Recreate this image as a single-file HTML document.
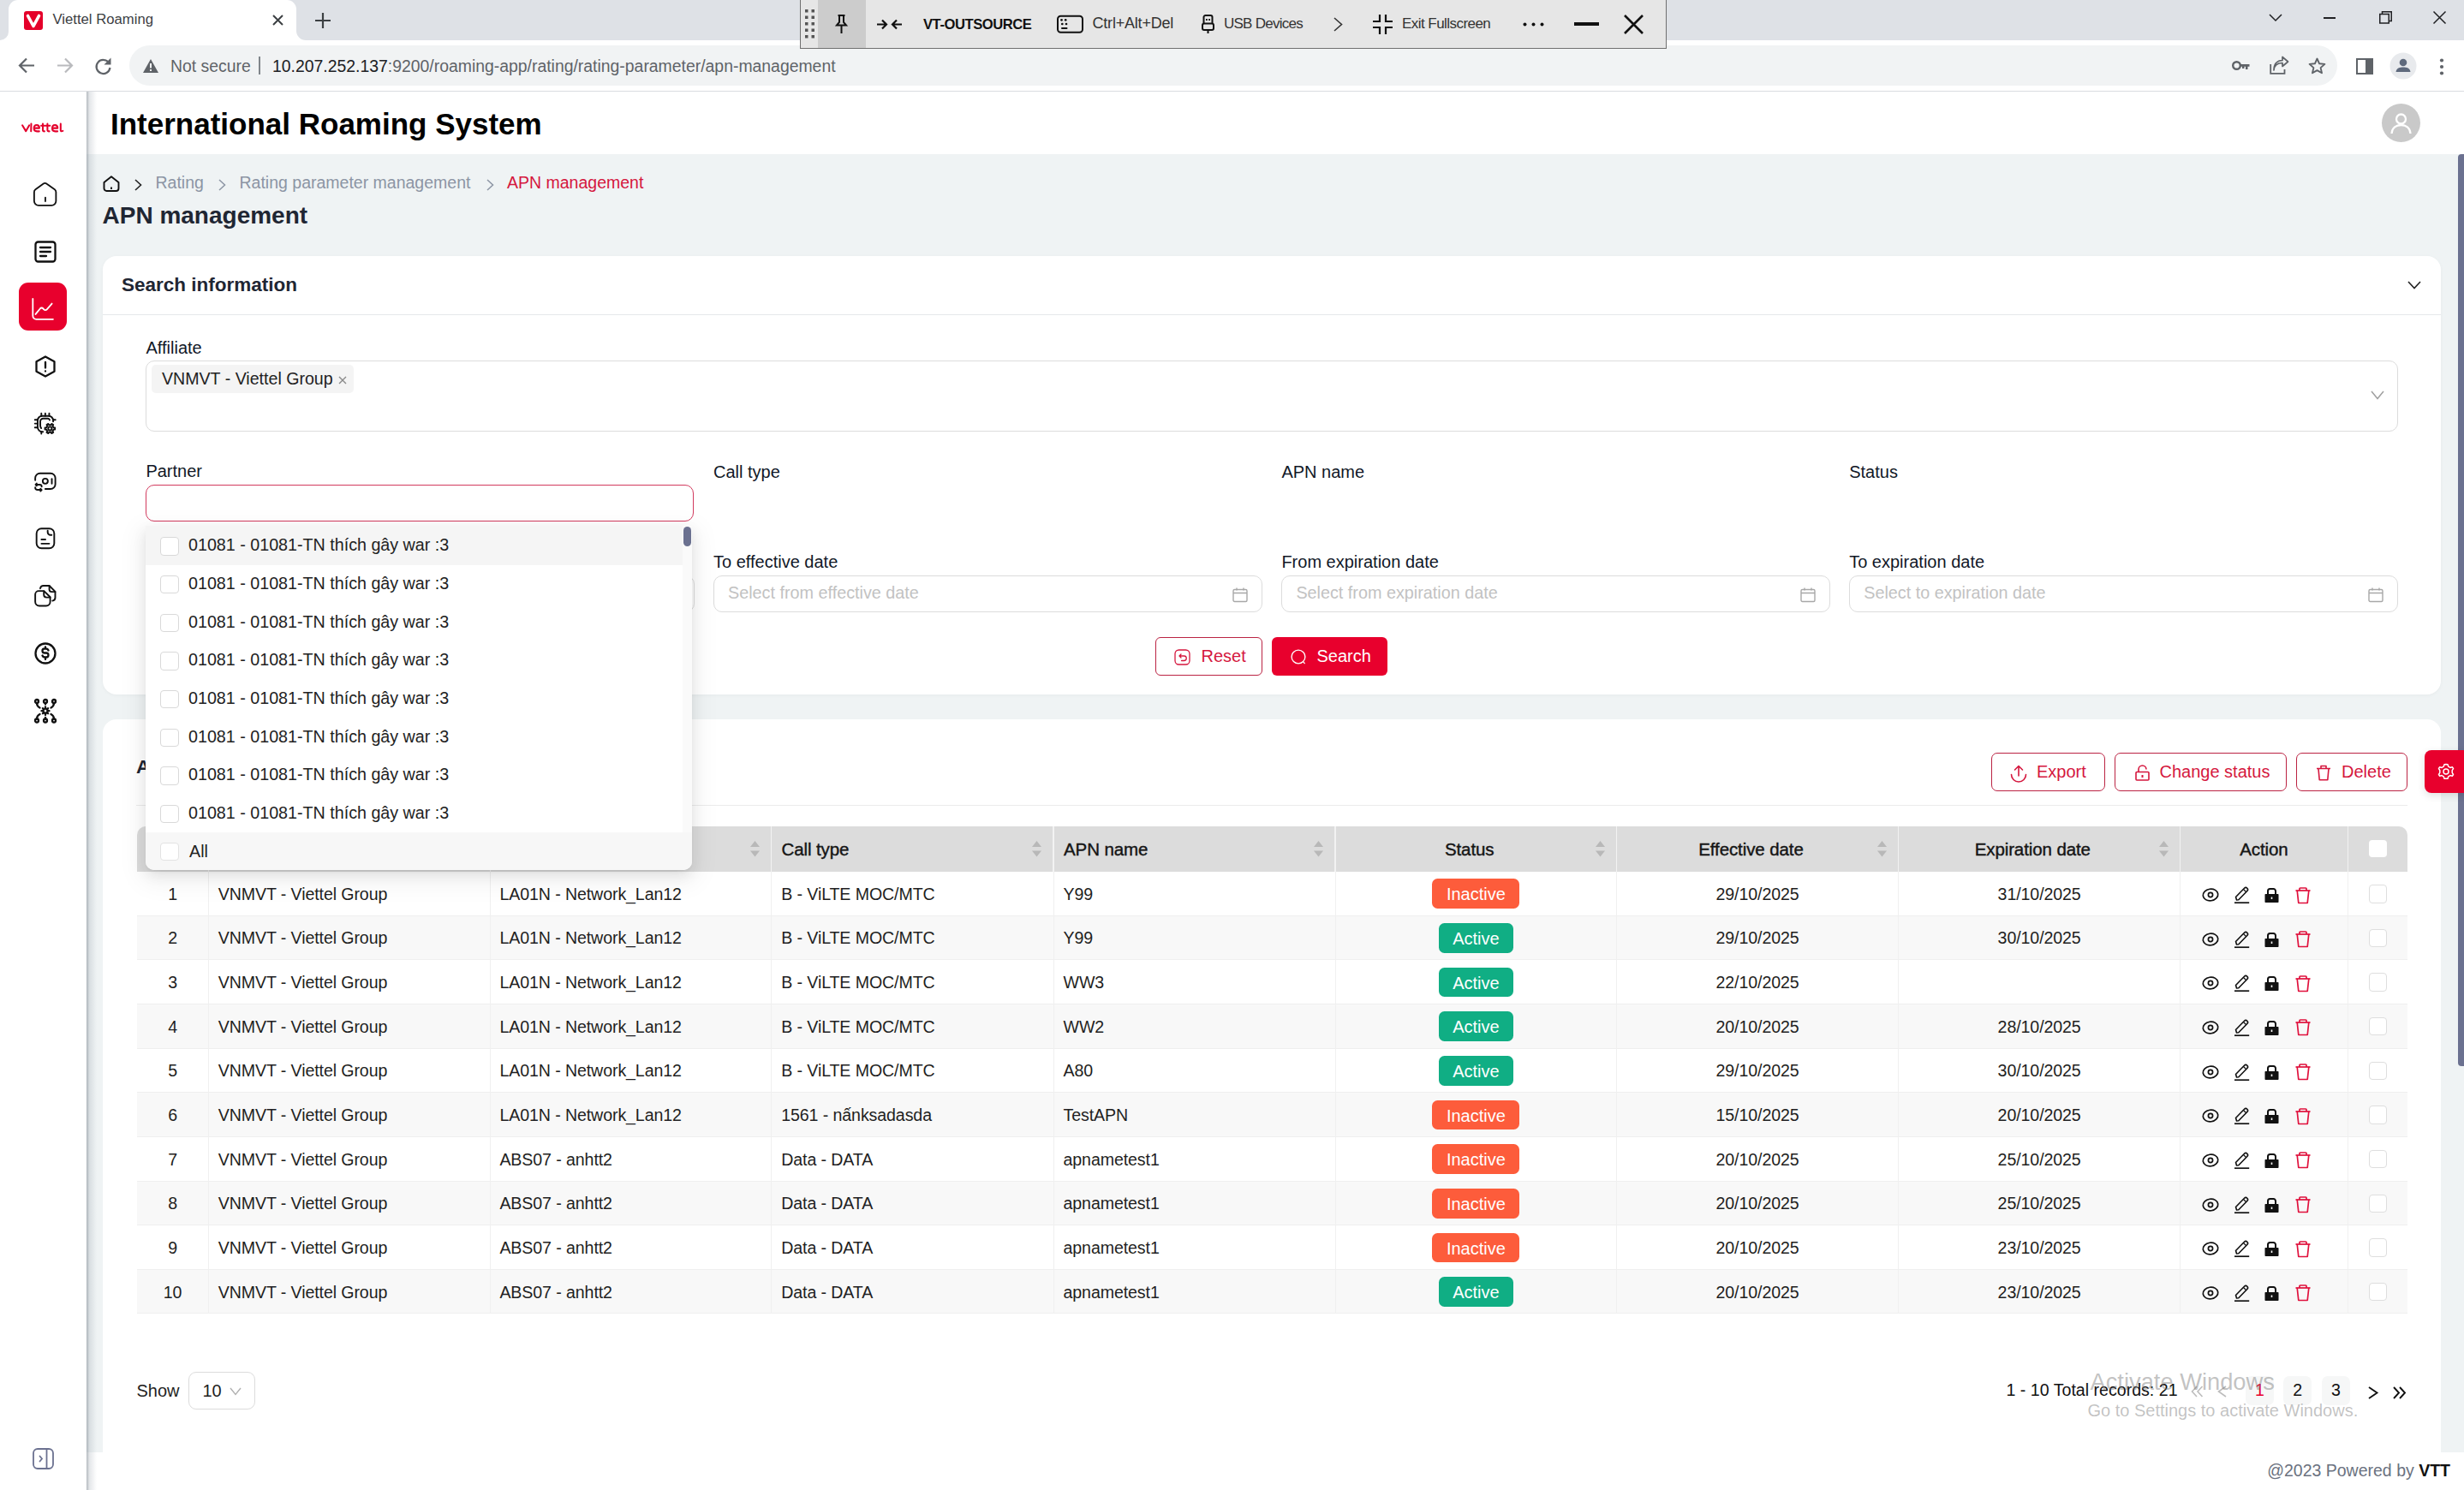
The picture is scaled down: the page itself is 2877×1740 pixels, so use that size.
<!DOCTYPE html><html><head><meta charset="utf-8"><title>Viettel Roaming</title><style>
html,body{margin:0;padding:0;}
body{width:2877px;height:1740px;position:relative;overflow:hidden;background:#fff;font-family:"Liberation Sans", sans-serif;}
.t{position:absolute;line-height:1;white-space:nowrap;}
.r{position:absolute;box-sizing:border-box;}
svg.r{overflow:visible;}

</style></head><body>
<div class="r" style="left:0.00px;top:0.00px;width:2877.00px;height:47.00px;background:#dee1e6;"></div>
<div class="r" style="left:10px;top:0;width:336px;height:47px;background:#fff;border-radius:11px 11px 0 0;"></div>
<div class="r" style="left:0.00px;top:35.00px;width:10.00px;height:12.00px;background:#fff;"></div>
<div class="r" style="left:0.00px;top:35.00px;width:10.00px;height:12.00px;background:#dee1e6;border-bottom-right-radius:11px;"></div>
<div class="r" style="left:346.00px;top:35.00px;width:12.00px;height:12.00px;background:#fff;"></div>
<div class="r" style="left:346.00px;top:35.00px;width:12.00px;height:12.00px;background:#dee1e6;border-bottom-left-radius:11px;"></div>
<svg class="r" style="left:28.00px;top:13.00px;" width="22" height="22" viewBox="0 0 22 22"><rect x="0" y="0" width="22" height="22" rx="3" fill="#e5002a"/><path d="M4.5 5.5 L11 17.5 L17.5 5.5" stroke="#fff" stroke-width="3.6" fill="none" stroke-linejoin="round" stroke-linecap="round"/></svg>
<div class="t" style="left:61.50px;top:15.36px;font-size:16.7px;color:#3c4043;">Viettel Roaming</div>
<svg class="r" style="left:318.00px;top:17.00px;" width="13" height="13" viewBox="0 0 13 13"><path d="M1 1 L12 12 M12 1 L1 12" stroke="#3c4043" stroke-width="2"/></svg>
<svg class="r" style="left:367.00px;top:14.00px;" width="20" height="20" viewBox="0 0 20 20"><path d="M10 1 V19 M1 10 H19" stroke="#3c4043" stroke-width="2.2"/></svg>
<svg class="r" style="left:2649.00px;top:16.00px;" width="16" height="9" viewBox="0 0 16 9"><path d="M1 1 L8 8 L15 1" stroke="#202124" stroke-width="1.5" fill="none"/></svg>
<div class="r" style="left:2713.00px;top:20.00px;width:14.00px;height:1.50px;background:#202124;"></div>
<svg class="r" style="left:2778.00px;top:13.00px;" width="15" height="15" viewBox="0 0 15 15"><rect x="0.75" y="3.5" width="10.5" height="10.5" fill="none" stroke="#202124" stroke-width="1.5"/><path d="M3.5 3.5 V0.75 H14.25 V11.5 H11.25" fill="none" stroke="#202124" stroke-width="1.5"/></svg>
<svg class="r" style="left:2841.00px;top:13.00px;" width="15" height="15" viewBox="0 0 15 15"><path d="M0.5 0.5 L14.5 14.5 M14.5 0.5 L0.5 14.5" stroke="#202124" stroke-width="1.5"/></svg>
<div class="r" style="left:0.00px;top:47.00px;width:2877.00px;height:59.00px;background:#fff;"></div>
<div class="r" style="left:0.00px;top:105.50px;width:2877.00px;height:1.50px;background:#dadce0;"></div>
<svg class="r" style="left:21.00px;top:67.00px;" width="20" height="19" viewBox="0 0 20 19"><path d="M19 9.5 H3 M10 1.5 L2 9.5 L10 17.5" stroke="#5f6368" stroke-width="2.2" fill="none"/></svg>
<svg class="r" style="left:66.00px;top:67.00px;" width="20" height="19" viewBox="0 0 20 19"><path d="M1 9.5 H17 M10 1.5 L18 9.5 L10 17.5" stroke="#b9babd" stroke-width="2.2" fill="none"/></svg>
<svg class="r" style="left:110.00px;top:67.00px;" width="21" height="20" viewBox="0 0 21 20"><path d="M17.2 6.5 A8 8 0 1 0 18.5 12" stroke="#5f6368" stroke-width="2.2" fill="none"/><path d="M19.5 0.5 V8.5 H11.5 Z" fill="#5f6368"/></svg>
<div class="r" style="left:151.00px;top:53.00px;width:2578.00px;height:47.00px;background:#f1f3f4;border-radius:23.5px;"></div>
<svg class="r" style="left:167.00px;top:69.00px;" width="18" height="16" viewBox="0 0 18 16"><path d="M9 0 L18 16 H0 Z" fill="#5f6368"/><rect x="8" y="5" width="2" height="5.5" fill="#f1f3f4"/><rect x="8" y="12" width="2" height="2" fill="#f1f3f4"/></svg>
<div class="t" style="left:199.00px;top:67.68px;font-size:19.4px;color:#5f6368;">Not secure</div>
<div class="r" style="left:302.00px;top:66.00px;width:2.00px;height:21.30px;background:#80868b;"></div>
<div class="t" style="left:318.00px;top:67.68px;font-size:19.4px;color:#5f6368;"><span style="color:#202124">10.207.252.137</span>:9200/roaming-app/rating/rating-parameter/apn-management</div>
<svg class="r" style="left:2606.00px;top:70.00px;" width="21" height="13" viewBox="0 0 21 13"><circle cx="5.5" cy="6.5" r="4.3" stroke="#5f6368" stroke-width="2.4" fill="none"/><path d="M9.5 5 H20.5 V7.8 H18.5 V11 H16 V7.8 H14.5 V10 H12 V7.8 H9.5 Z" fill="#5f6368"/></svg>
<svg class="r" style="left:2650.00px;top:67.00px;" width="23" height="20" viewBox="0 0 23 20"><path d="M1.2 8 V18.8 H17.5 V14" stroke="#5f6368" stroke-width="1.8" fill="none"/><path d="M5 15 C5.5 9 9.5 6.5 15 6.5 V10.5 L21.5 5 L15 -0.5 V3.5 C8.5 3.5 5 8 5 15 Z" stroke="#5f6368" stroke-width="1.7" fill="none" stroke-linejoin="round"/></svg>
<svg class="r" style="left:2695.00px;top:67.00px;" width="21" height="20" viewBox="0 0 21 20"><path d="M10.5 1.5 L13.1 7.3 L19.4 7.9 L14.6 12.1 L16 18.3 L10.5 15.1 L5 18.3 L6.4 12.1 L1.6 7.9 L7.9 7.3 Z" stroke="#5f6368" stroke-width="1.9" fill="none" stroke-linejoin="round"/></svg>
<svg class="r" style="left:2751.00px;top:68.00px;" width="20" height="19" viewBox="0 0 20 19"><rect x="1" y="1" width="18" height="17" stroke="#5f6368" stroke-width="2" fill="none"/><rect x="11" y="1" width="8" height="17" fill="#5f6368"/></svg>
<svg class="r" style="left:2790.00px;top:61.00px;" width="32" height="32" viewBox="0 0 32 32"><circle cx="16" cy="16" r="15.5" fill="#e8eaed"/><circle cx="16" cy="12" r="4.3" fill="#5f6a7d"/><path d="M7.5 23 C8 18.5 12 17.5 16 17.5 C20 17.5 24 18.5 24.5 23 Z" fill="#5f6a7d"/></svg>
<svg class="r" style="left:2848.00px;top:68.00px;" width="6" height="20" viewBox="0 0 6 20"><circle cx="3" cy="2.5" r="2.1" fill="#5f6368"/><circle cx="3" cy="10" r="2.1" fill="#5f6368"/><circle cx="3" cy="17.5" r="2.1" fill="#5f6368"/></svg>
<div class="r" style="left:934.00px;top:0.00px;width:1012.00px;height:57.00px;background:#e6e6e6;border:1.5px solid #707070;border-top:none;"></div>
<div class="r" style="left:955.00px;top:0.00px;width:56.00px;height:55.50px;background:#cccccc;"></div>
<svg class="r" style="left:940.00px;top:11.00px;" width="12" height="34" viewBox="0 0 12 34"><rect x="0" y="0" width="3.5" height="3.5" fill="#555"/><rect x="0" y="7.5" width="3.5" height="3.5" fill="#555"/><rect x="0" y="15" width="3.5" height="3.5" fill="#555"/><rect x="0" y="22.5" width="3.5" height="3.5" fill="#555"/><rect x="0" y="30" width="3.5" height="3.5" fill="#555"/><rect x="7.5" y="0" width="3.5" height="3.5" fill="#555"/><rect x="7.5" y="7.5" width="3.5" height="3.5" fill="#555"/><rect x="7.5" y="15" width="3.5" height="3.5" fill="#555"/><rect x="7.5" y="22.5" width="3.5" height="3.5" fill="#555"/><rect x="7.5" y="30" width="3.5" height="3.5" fill="#555"/></svg>
<svg class="r" style="left:975.00px;top:17.00px;" width="15" height="23" viewBox="0 0 15 23"><path d="M3.5 1 H11.5 M5 1 V9 L2 12.5 H13 L10 9 V1 M7.5 12.5 V22" stroke="#111" stroke-width="2" fill="none"/></svg>
<svg class="r" style="left:1024.00px;top:22.00px;" width="29" height="13" viewBox="0 0 29 13"><path d="M0 6.5 H11 M6 1.5 L11 6.5 L6 11.5 M29 6.5 H18 M23 1.5 L18 6.5 L23 11.5" stroke="#111" stroke-width="2.2" fill="none"/></svg>
<div class="t" style="left:1078.00px;top:20.95px;font-size:16.6px;color:#111;font-weight:700;letter-spacing:-0.45px;">VT-OUTSOURCE</div>
<svg class="r" style="left:1233.00px;top:17.00px;" width="33" height="22" viewBox="0 0 33 22"><rect x="2" y="1.8" width="29" height="19" rx="3.5" stroke="#111" stroke-width="2" fill="none"/><circle cx="6.5" cy="6.3" r="1.35" fill="#111"/><circle cx="11.2" cy="6.3" r="1.35" fill="#111"/><circle cx="7.3" cy="11" r="1.35" fill="#111"/><circle cx="12" cy="11" r="1.35" fill="#111"/><path d="M7 16 H12.5" stroke="#111" stroke-width="2" stroke-linecap="round"/></svg>
<div class="t" style="left:1275.50px;top:18.26px;font-size:18px;color:#333;letter-spacing:-0.2px;">Ctrl+Alt+Del</div>
<svg class="r" style="left:1402.00px;top:17.00px;" width="17" height="23" viewBox="0 0 17 23"><path d="M3.5 11 V3 A2 2 0 0 1 5.5 1 H11.5 A2 2 0 0 1 13.5 3 V11" stroke="#111" stroke-width="2" fill="none"/><rect x="2" y="10.5" width="13" height="7.5" rx="2" stroke="#111" stroke-width="2" fill="none"/><rect x="6" y="5" width="1.8" height="2" fill="#111"/><rect x="9.2" y="5" width="1.8" height="2" fill="#111"/><path d="M8.5 18 V22" stroke="#111" stroke-width="2"/></svg>
<div class="t" style="left:1429.00px;top:19.11px;font-size:17px;color:#333;letter-spacing:-0.75px;">USB Devices</div>
<svg class="r" style="left:1557.00px;top:20.00px;" width="11" height="17" viewBox="0 0 11 17"><path d="M1 1 L9.5 8.5 L1 16" stroke="#333" stroke-width="1.6" fill="none"/></svg>
<svg class="r" style="left:1603.00px;top:17.00px;" width="23" height="23" viewBox="0 0 23 23"><path d="M8 0 V8 H0 M15 0 V8 H23 M8 23 V15 H0 M15 23 V15 H23" stroke="#111" stroke-width="2.2" fill="none"/></svg>
<div class="t" style="left:1637.00px;top:19.11px;font-size:17px;color:#333;letter-spacing:-0.55px;">Exit Fullscreen</div>
<svg class="r" style="left:1778.00px;top:26.00px;" width="26" height="5" viewBox="0 0 26 5"><circle cx="2.5" cy="2.5" r="2" fill="#111"/><circle cx="12.5" cy="2.5" r="2" fill="#111"/><circle cx="22.5" cy="2.5" r="2" fill="#111"/></svg>
<div class="r" style="left:1838.00px;top:25.50px;width:29.00px;height:4.00px;background:#111;"></div>
<svg class="r" style="left:1896.00px;top:17.00px;" width="23" height="23" viewBox="0 0 23 23"><path d="M1 1 L22 22 M22 1 L1 22" stroke="#111" stroke-width="2.6"/></svg>
<div class="r" style="left:101.00px;top:180.00px;width:2776.00px;height:1516.00px;background:#eff3f4;"></div>
<div class="r" style="left:101.00px;top:107.00px;width:2776.00px;height:73.00px;background:#fff;"></div>
<div class="t" style="left:129.00px;top:127.37px;font-size:35px;color:#000;font-weight:700;">International Roaming System</div>
<svg class="r" style="left:2781.00px;top:121.00px;" width="45" height="45" viewBox="0 0 45 45"><circle cx="22.5" cy="22.5" r="22.5" fill="#c9c9c9"/><circle cx="22.5" cy="18" r="5.5" stroke="#fff" stroke-width="2.3" fill="none"/><path d="M11.5 35 C12 28 17 25 22.5 25 C28 25 33 28 33.5 35" stroke="#fff" stroke-width="2.3" fill="none"/></svg>
<div class="r" style="left:101.00px;top:1696.00px;width:2776.00px;height:44.00px;background:#fff;"></div>
<div class="t" style="left:2061.00px;width:800px;text-align:right;top:1708.49px;font-size:19.5px;color:#111;"><span style="color:#6b7280">@2023 Powered by </span><b style="color:#111">VTT</b></div>
<div class="r" style="left:0.00px;top:107.00px;width:101.00px;height:1633.00px;background:#fff;"></div>
<div class="r" style="left:101.00px;top:107.00px;width:12.00px;height:1633.00px;background:linear-gradient(to right, rgba(120,130,140,0.55), rgba(150,160,170,0.25) 30%, rgba(200,210,215,0.0) 100%);"></div>
<svg class="r" style="left:15.00px;top:130.00px;" width="70" height="35" viewBox="0 0 2464 1232"><g stroke="#e4022d" stroke-width="72" fill="none" stroke-linecap="round" stroke-linejoin="round"><path d="M390 575 L535 815 L675 575"/><path d="M755 515 L748 815"/><path d="M890 690 L1090 690 C1090 605 1040 565 980 565 C912 565 868 622 868 697 C868 778 915 822 990 822 L1085 822"/><path d="M1232 515 L1232 765 C1232 805 1255 822 1300 822 M1165 592 L1315 592"/><path d="M1422 515 L1422 765 C1422 805 1445 822 1500 822 M1360 592 L1525 592"/><path d="M1640 690 L1840 690 C1840 605 1790 565 1730 565 C1662 565 1618 622 1618 697 C1618 778 1665 822 1740 822 L1835 822"/><path d="M1965 515 L1965 785 C1965 818 1995 830 2055 805"/></g></svg>
<svg class="r" style="left:33.00px;top:208.00px;" width="38" height="38" viewBox="0 0 1490 1490"><g stroke="#111" fill="none" stroke-linecap="round" stroke-linejoin="round" stroke-width="72"><path d="M270 650 A150 150 0 0 1 330 520 L680 262 A140 140 0 0 1 850 262 L1210 520 A150 150 0 0 1 1270 640 L1270 1050 A200 200 0 0 1 1070 1250 L470 1250 A200 200 0 0 1 270 1050 Z"/><path d="M782 885 L782 1058"/></g></svg>
<svg class="r" style="left:40.00px;top:281.00px;" width="26" height="26" viewBox="0 0 26 26"><rect x="1.5" y="1.5" width="23" height="23" rx="3" stroke="#111" stroke-width="2.3" fill="none" stroke-linecap="round" stroke-linejoin="round"/><path d="M7 8 H19 M7 13 H19 M7 18 H14" stroke="#111" stroke-width="2.3" fill="none" stroke-linecap="round" stroke-linejoin="round"/></svg>
<div class="r" style="left:22.00px;top:330.00px;width:56.00px;height:56.00px;background:#e8002d;border-radius:11px;"></div>
<svg class="r" style="left:30.00px;top:339.00px;" width="40" height="40" viewBox="0 0 1490 1490"><g stroke="#fff" fill="none" stroke-linecap="round" stroke-linejoin="round" stroke-width="68"><path d="M310 370 L310 1110 A150 150 0 0 0 460 1260 L1190 1260"/><path d="M430 1040 L625 800 A85 85 0 0 1 760 795 L790 830 A85 85 0 0 0 920 835 L1140 580"/></g></svg>
<svg class="r" style="left:41.00px;top:415.00px;" width="24" height="26" viewBox="0 0 24 26"><path d="M12 1.5 L22.5 7.2 V18.8 L12 24.5 L1.5 18.8 V7.2 Z" stroke="#111" stroke-width="2.3" fill="none" stroke-linecap="round" stroke-linejoin="round"/><path d="M12 8 V14.5 M12 18.5 V18.6" stroke="#111" stroke-width="2.3" fill="none" stroke-linecap="round" stroke-linejoin="round"/></svg>
<svg class="r" style="left:34.00px;top:476.00px;" width="38" height="38" viewBox="0 0 1490 1490"><g stroke="#111" fill="none" stroke-linecap="round" stroke-linejoin="round" stroke-width="75"><path d="M635 1105 L600 1105 A210 210 0 0 1 390 895 L390 590 A210 210 0 0 1 600 380 L890 380 A210 210 0 0 1 1100 590 L1100 640"/><path d="M555 945 A220 220 0 0 1 510 810 L510 640 A140 140 0 0 1 650 500 L860 500 A90 90 0 0 1 940 570"/><path d="M560 265 V380 M740 265 V380 M920 265 V380 M265 560 H390 M265 730 H390 M265 910 H390 M1100 560 H1205 M560 1105 V1200"/><path d="M1098 878 L1114 915 L1183 916 L1183 1004 L1114 1005 L1098 1042 L1074 1075 L1107 1135 L1031 1179 L995 1120 L955 1125 L915 1120 L879 1179 L803 1135 L836 1075 L812 1042 L796 1005 L727 1004 L727 916 L796 915 L812 878 L836 845 L803 785 L879 741 L915 800 L955 795 L995 800 L1031 741 L1107 785 L1074 845 Z"/><circle cx="955" cy="960" r="82"/></g></svg>
<svg class="r" style="left:34.00px;top:544.00px;" width="38" height="38" viewBox="0 0 1490 1490"><g stroke="#111" fill="none" stroke-linecap="round" stroke-linejoin="round" stroke-width="75"><path d="M280 660 L280 560 A220 220 0 0 1 500 340 L980 340 A220 220 0 0 1 1200 560 L1200 840 A220 220 0 0 1 980 1060 L740 1060"/><circle cx="740" cy="700" r="118"/><path d="M1040 595 L1040 815"/><path d="M575 950 A90 90 0 0 0 485 860 L300 860 M345 805 L295 860 L345 915"/><path d="M280 990 A110 110 0 0 0 390 1100 L565 1100 M520 1045 L575 1100 L520 1155"/></g></svg>
<svg class="r" style="left:34.00px;top:610.00px;" width="38" height="38" viewBox="0 0 1490 1490"><g stroke="#111" fill="none" stroke-linecap="round" stroke-linejoin="round" stroke-width="75"><rect x="340" y="283" width="810" height="905" rx="225"/><path d="M850 380 L850 450 A130 130 0 0 0 980 580 L1030 580"/><path d="M565 785 L745 785 M565 975 L920 975"/></g></svg>
<svg class="r" style="left:34.00px;top:677.00px;" width="38" height="38" viewBox="0 0 1490 1490"><g stroke="#111" fill="none" stroke-linecap="round" stroke-linejoin="round" stroke-width="75"><path d="M510 400 A150 150 0 0 1 660 275 L925 275 L1195 545 L1195 830 A150 150 0 0 1 1070 965"/><path d="M925 280 L925 450 A110 110 0 0 0 1035 555 L1190 555"/><path d="M680 515 L440 515 A160 160 0 0 0 280 675 L280 1010 A185 185 0 0 0 465 1195 L780 1195 A185 185 0 0 0 965 1010 L965 795 Z"/><path d="M675 525 L675 690 A120 120 0 0 0 795 810 L960 810"/></g></svg>
<svg class="r" style="left:40.00px;top:750.00px;" width="26" height="26" viewBox="0 0 26 26"><circle cx="13" cy="13" r="11.5" stroke="#111" stroke-width="2.3" fill="none" stroke-linecap="round" stroke-linejoin="round"/><path d="M16.5 9.5 A3 3 0 0 0 13.5 7.5 H12 A2.5 2.5 0 0 0 12 12.5 H14 A2.5 2.5 0 0 1 14 17.5 H12.5 A3 3 0 0 1 9.5 15.5 M13 5.5 V7.5 M13 17.5 V20" stroke="#111" stroke-width="2.3" fill="none" stroke-linecap="round" stroke-linejoin="round" stroke-width="2.1"/></svg>
<svg class="r" style="left:40.00px;top:816.00px;" width="26" height="29" viewBox="0 0 26 29"><circle cx="3" cy="3" r="2" stroke="#111" stroke-width="2.3" fill="none" stroke-linecap="round" stroke-linejoin="round" stroke-width="1.9"/><circle cx="13" cy="3" r="2" stroke="#111" stroke-width="2.3" fill="none" stroke-linecap="round" stroke-linejoin="round" stroke-width="1.9"/><circle cx="23" cy="3" r="2" stroke="#111" stroke-width="2.3" fill="none" stroke-linecap="round" stroke-linejoin="round" stroke-width="1.9"/><circle cx="3" cy="25.5" r="2" stroke="#111" stroke-width="2.3" fill="none" stroke-linecap="round" stroke-linejoin="round" stroke-width="1.9"/><circle cx="13" cy="25.5" r="2" stroke="#111" stroke-width="2.3" fill="none" stroke-linecap="round" stroke-linejoin="round" stroke-width="1.9"/><circle cx="23" cy="25.5" r="2" stroke="#111" stroke-width="2.3" fill="none" stroke-linecap="round" stroke-linejoin="round" stroke-width="1.9"/><path d="M3 5 C3 8 4.5 9.5 6.5 10.5 M23 5 C23 8 21.5 9.5 19.5 10.5 M13 5 V6.6 M3 23.5 C3 20.5 4.5 19 6.5 18 M23 23.5 C23 20.5 21.5 19 19.5 18 M13 23.5 V21.9" stroke="#111" stroke-width="2.3" fill="none" stroke-linecap="round" stroke-linejoin="round" stroke-width="1.9"/><circle cx="13" cy="14.2" r="2.5" stroke="#111" stroke-width="2.3" fill="none" stroke-linecap="round" stroke-linejoin="round" stroke-width="1.9"/><path d="M13 9.5 V10.5 M13 18 V19 M8.5 14.2 H9.5 M16.5 14.2 H17.5 M9.9 11.1 L10.6 11.8 M15.4 16.6 L16.1 17.3 M9.9 17.3 L10.6 16.6 M15.4 11.8 L16.1 11.1" stroke="#111" stroke-width="2.3" fill="none" stroke-linecap="round" stroke-linejoin="round" stroke-width="1.9"/></svg>
<svg class="r" style="left:38.00px;top:1691.00px;" width="25" height="25" viewBox="0 0 25 25"><rect x="1" y="1" width="23" height="23" rx="5" stroke="#6b7190" stroke-width="1.8" fill="none"/><path d="M16.5 1 V24" stroke="#6b7190" stroke-width="1.8"/><path d="M8.5 9.5 L11 12.5 L8.5 15.5" stroke="#6b7190" stroke-width="1.8" fill="none" stroke-linecap="round"/></svg>
<div class="r" style="left:2870.00px;top:180.00px;width:7.00px;height:1065.00px;background:#6b7190;border-radius:4px 0 0 4px;"></div>
<svg class="r" style="left:120.00px;top:205.00px;" width="20" height="19" viewBox="0 0 20 19"><path d="M1.5 8 L10 1.2 L18.5 8 V15 A3 3 0 0 1 15.5 18 H4.5 A3 3 0 0 1 1.5 15 Z" stroke="#111" stroke-width="1.9" fill="none" stroke-linejoin="round"/><path d="M10 13.5 V16" stroke="#111" stroke-width="1.9"/></svg>
<svg class="r" style="left:157.00px;top:209.00px;" width="9" height="14" viewBox="0 0 9 14"><path d="M1 1 L7.5 7 L1 13" stroke="#222" stroke-width="1.6" fill="none"/></svg>
<div class="t" style="left:181.50px;top:204.19px;font-size:19.5px;color:#8c95a4;">Rating</div>
<svg class="r" style="left:255.00px;top:209.00px;" width="9" height="14" viewBox="0 0 9 14"><path d="M1 1 L7.5 7 L1 13" stroke="#8c95a4" stroke-width="1.5" fill="none"/></svg>
<div class="t" style="left:279.50px;top:204.19px;font-size:19.5px;color:#8c95a4;">Rating parameter management</div>
<svg class="r" style="left:568.00px;top:209.00px;" width="9" height="14" viewBox="0 0 9 14"><path d="M1 1 L7.5 7 L1 13" stroke="#8c95a4" stroke-width="1.5" fill="none"/></svg>
<div class="t" style="left:592.00px;top:204.19px;font-size:19.5px;color:#d5173e;">APN management</div>
<div class="t" style="left:119.50px;top:238.10px;font-size:28px;color:#1f2633;font-weight:700;">APN management</div>
<div class="r" style="left:120px;top:299px;width:2730px;height:512px;background:#fff;border-radius:16px;box-shadow:0 1px 4px rgba(0,0,0,0.04);"></div>
<div class="t" style="left:142.00px;top:321.95px;font-size:22.5px;color:#1f2633;font-weight:700;">Search information</div>
<svg class="r" style="left:2811.00px;top:328.00px;" width="16" height="10" viewBox="0 0 16 10"><path d="M1 1 L8 8.5 L15 1" stroke="#222" stroke-width="1.6" fill="none"/></svg>
<div class="r" style="left:120.00px;top:366.50px;width:2730.00px;height:1.20px;background:#e6e8eb;"></div>
<div class="t" style="left:170.50px;top:395.57px;font-size:20px;color:#111827;">Affiliate</div>
<div class="r" style="left:170px;top:421px;width:2629.5px;height:82.5px;border:1.3px solid #dcdcdc;border-radius:10px;"></div>
<div class="r" style="left:177px;top:426px;width:235.6px;height:33px;background:#f4f4f4;border-radius:5px;"></div>
<div class="t" style="left:189.00px;top:432.91px;font-size:19.6px;color:#222;">VNMVT - Viettel Group</div>
<svg class="r" style="left:395.00px;top:439.00px;" width="10" height="10" viewBox="0 0 10 10"><path d="M1 1 L9 9 M9 1 L1 9" stroke="#8a8a8a" stroke-width="1.4"/></svg>
<svg class="r" style="left:2768.00px;top:456.00px;" width="16" height="11" viewBox="0 0 16 11"><path d="M1 1 L8 9.5 L15 1" stroke="#a0a0a0" stroke-width="1.5" fill="none"/></svg>
<div class="t" style="left:170.40px;top:540.07px;font-size:20px;color:#111827;">Partner</div>
<div class="t" style="left:833.00px;top:540.57px;font-size:20px;color:#111827;">Call type</div>
<div class="t" style="left:1496.40px;top:540.57px;font-size:20px;color:#111827;">APN name</div>
<div class="t" style="left:2159.20px;top:540.57px;font-size:20px;color:#111827;">Status</div>
<div class="r" style="left:170.4px;top:566.3px;width:640px;height:43.2px;border:1.6px solid #d23a5e;border-radius:10px;"></div>
<div class="t" style="left:170.40px;top:646.27px;font-size:20px;color:#111827;">From effective date</div>
<div class="r" style="left:170.4px;top:672.4px;width:640.6px;height:43px;border:1.3px solid #dcdcdc;border-radius:10px;background:#fff;"></div>
<div class="t" style="left:187.40px;top:683.24px;font-size:19.8px;color:#c2c2c2;">Select from effective date</div>
<svg class="r" style="left:775.90px;top:686.00px;" width="18" height="18" viewBox="0 0 18 18"><rect x="1" y="2.5" width="16" height="14" rx="1.5" stroke="#a8a8a8" stroke-width="1.4" fill="none"/><path d="M1 6.5 H17 M5 0.5 V3.5 M13 0.5 V3.5" stroke="#a8a8a8" stroke-width="1.4"/></svg>
<div class="t" style="left:833.00px;top:646.27px;font-size:20px;color:#111827;">To effective date</div>
<div class="r" style="left:833px;top:672.4px;width:640.6px;height:43px;border:1.3px solid #dcdcdc;border-radius:10px;background:#fff;"></div>
<div class="t" style="left:850.00px;top:683.24px;font-size:19.8px;color:#c2c2c2;">Select from effective date</div>
<svg class="r" style="left:1438.50px;top:686.00px;" width="18" height="18" viewBox="0 0 18 18"><rect x="1" y="2.5" width="16" height="14" rx="1.5" stroke="#a8a8a8" stroke-width="1.4" fill="none"/><path d="M1 6.5 H17 M5 0.5 V3.5 M13 0.5 V3.5" stroke="#a8a8a8" stroke-width="1.4"/></svg>
<div class="t" style="left:1496.40px;top:646.27px;font-size:20px;color:#111827;">From expiration date</div>
<div class="r" style="left:1496.4px;top:672.4px;width:640.6px;height:43px;border:1.3px solid #dcdcdc;border-radius:10px;background:#fff;"></div>
<div class="t" style="left:1513.40px;top:683.24px;font-size:19.8px;color:#c2c2c2;">Select from expiration date</div>
<svg class="r" style="left:2101.90px;top:686.00px;" width="18" height="18" viewBox="0 0 18 18"><rect x="1" y="2.5" width="16" height="14" rx="1.5" stroke="#a8a8a8" stroke-width="1.4" fill="none"/><path d="M1 6.5 H17 M5 0.5 V3.5 M13 0.5 V3.5" stroke="#a8a8a8" stroke-width="1.4"/></svg>
<div class="t" style="left:2159.20px;top:646.27px;font-size:20px;color:#111827;">To expiration date</div>
<div class="r" style="left:2159.2px;top:672.4px;width:640.6px;height:43px;border:1.3px solid #dcdcdc;border-radius:10px;background:#fff;"></div>
<div class="t" style="left:2176.20px;top:683.24px;font-size:19.8px;color:#c2c2c2;">Select to expiration date</div>
<svg class="r" style="left:2764.70px;top:686.00px;" width="18" height="18" viewBox="0 0 18 18"><rect x="1" y="2.5" width="16" height="14" rx="1.5" stroke="#a8a8a8" stroke-width="1.4" fill="none"/><path d="M1 6.5 H17 M5 0.5 V3.5 M13 0.5 V3.5" stroke="#a8a8a8" stroke-width="1.4"/></svg>
<div class="r" style="left:1349px;top:744px;width:124.6px;height:44.7px;border:1.4px solid #bb2343;border-radius:6px;background:#fff;"></div>
<svg class="r" style="left:1371.00px;top:758.00px;" width="19" height="19" viewBox="0 0 19 19"><rect x="1" y="1" width="17" height="17" rx="4.5" stroke="#d5173e" stroke-width="1.3" fill="none"/><path d="M6 8 H11.5 A2.7 2.7 0 0 1 11.5 13.5 H8.5 M8 6 L6 8 L8 10" stroke="#d5173e" stroke-width="1.3" fill="none" stroke-linecap="round" stroke-linejoin="round"/></svg>
<div class="t" style="left:1402.50px;top:756.07px;font-size:20px;color:#d5173e;">Reset</div>
<div class="r" style="left:1484.8px;top:744px;width:135.7px;height:44.7px;background:#e8002d;border-radius:6px;"></div>
<svg class="r" style="left:1506.50px;top:758.00px;" width="20" height="20" viewBox="0 0 20 20"><circle cx="9" cy="9" r="7.9" stroke="#fff" stroke-width="1.35" fill="none"/><path d="M15 15.3 L16.3 16.6" stroke="#fff" stroke-width="1.3" stroke-linecap="round"/></svg>
<div class="t" style="left:1537.50px;top:756.07px;font-size:20px;color:#fff;">Search</div>
<div class="r" style="left:120px;top:840px;width:2730px;height:856px;background:#fff;border-radius:16px 16px 0 0;"></div>
<div class="t" style="left:159.00px;top:884.95px;font-size:22.5px;color:#1f2633;font-weight:700;">APN list</div>
<div class="r" style="left:2325.3px;top:879.2px;width:132.30px;height:45px;border:1.4px solid #bb2343;border-radius:7px;background:#fff;"></div>

<div class="t" style="left:2378.00px;top:891.07px;font-size:20px;color:#d5173e;">Export</div>
<svg class="r" style="left:2346.50px;top:893.00px;" width="20" height="19" viewBox="0 0 20 19"><path d="M10 13 V1.5 M5.5 6 L10 1.5 L14.5 6" stroke="#d5173e" stroke-width="1.6" fill="none" stroke-linecap="round" stroke-linejoin="round"/><path d="M1.5 11.5 A8.5 8.5 0 0 0 18.5 11.5" stroke="#d5173e" stroke-width="1.6" fill="none" stroke-linecap="round"/></svg>
<div class="r" style="left:2469px;top:879.2px;width:200.60px;height:45px;border:1.4px solid #bb2343;border-radius:7px;background:#fff;"></div>

<div class="t" style="left:2521.50px;top:891.07px;font-size:20px;color:#d5173e;">Change status</div>
<svg class="r" style="left:2492.50px;top:893.00px;" width="17" height="19" viewBox="0 0 17 19"><path d="M4 8.5 V5.5 A4.5 4.5 0 0 1 13 5.5" stroke="#d5173e" stroke-width="1.6" fill="none"/><rect x="1" y="8.5" width="15" height="9.5" rx="1" stroke="#d5173e" stroke-width="1.6" fill="none"/><rect x="7.5" y="12" width="2" height="3" fill="#d5173e"/></svg>
<div class="r" style="left:2681px;top:879.2px;width:129.50px;height:45px;border:1.4px solid #bb2343;border-radius:7px;background:#fff;"></div>

<div class="t" style="left:2734.00px;top:891.07px;font-size:20px;color:#d5173e;">Delete</div>
<svg class="r" style="left:2704.00px;top:893.00px;" width="18" height="19" viewBox="0 0 18 19"><path d="M1 4.5 H17 M6 4.5 V1.5 H12 V4.5" stroke="#d5173e" stroke-width="1.6" fill="none" stroke-linejoin="round"/><path d="M3 4.5 L4.2 17.8 H13.8 L15 4.5" stroke="#d5173e" stroke-width="1.6" fill="none" stroke-linejoin="round"/></svg>
<div class="r" style="left:2831px;top:876px;width:50px;height:50px;background:#e8002d;border-radius:8px 0 0 8px;box-shadow:0 3px 10px rgba(0,0,0,0.12);"></div>
<svg class="r" style="left:2845.50px;top:891.00px;" width="20" height="20" viewBox="0 0 20 20"><path d="M10 1.5 L12 1.8 L12.8 4.2 L14.9 5.4 L17.3 4.8 L18.5 6.5 L17.2 8.6 V11.4 L18.5 13.5 L17.3 15.2 L14.9 14.6 L12.8 15.8 L12 18.2 H8 L7.2 15.8 L5.1 14.6 L2.7 15.2 L1.5 13.5 L2.8 11.4 V8.6 L1.5 6.5 L2.7 4.8 L5.1 5.4 L7.2 4.2 L8 1.8 Z" stroke="#fff" stroke-width="1.5" fill="none" stroke-linejoin="round"/><circle cx="10" cy="10" r="3" stroke="#fff" stroke-width="1.5" fill="none"/></svg>
<div class="r" style="left:159.00px;top:939.80px;width:2651.50px;height:1.20px;background:#ececec;"></div>
<div class="r" style="left:159.5px;top:965px;width:2651.50px;height:53px;background:#dcdcdc;border-radius:10px 10px 0 0;"></div>
<div class="r" style="left:243.10px;top:965.00px;width:1.20px;height:53.00px;background:#f2f2f2;"></div>
<div class="r" style="left:571.80px;top:965.00px;width:1.20px;height:53.00px;background:#f2f2f2;"></div>
<div class="r" style="left:900.10px;top:965.00px;width:1.20px;height:53.00px;background:#f2f2f2;"></div>
<div class="r" style="left:1229.40px;top:965.00px;width:1.20px;height:53.00px;background:#f2f2f2;"></div>
<div class="r" style="left:1558.40px;top:965.00px;width:1.20px;height:53.00px;background:#f2f2f2;"></div>
<div class="r" style="left:1887.00px;top:965.00px;width:1.20px;height:53.00px;background:#f2f2f2;"></div>
<div class="r" style="left:2215.90px;top:965.00px;width:1.20px;height:53.00px;background:#f2f2f2;"></div>
<div class="r" style="left:2545.20px;top:965.00px;width:1.20px;height:53.00px;background:#f2f2f2;"></div>
<div class="r" style="left:2740.90px;top:965.00px;width:1.20px;height:53.00px;background:#f2f2f2;"></div>
<div class="t" style="left:172.00px;top:981.95px;font-size:20.5px;color:#111827;-webkit-text-stroke:0.45px #111827;">#</div>
<div class="t" style="left:255.70px;top:981.95px;font-size:20.5px;color:#151515;letter-spacing:-0.1px;-webkit-text-stroke:0.4px #151515;">Affiliate</div>
<div class="t" style="left:584.40px;top:981.95px;font-size:20.5px;color:#151515;letter-spacing:-0.1px;-webkit-text-stroke:0.4px #151515;">Partner</div>
<div class="t" style="left:912.50px;top:981.95px;font-size:20.5px;color:#151515;letter-spacing:-0.1px;-webkit-text-stroke:0.4px #151515;">Call type</div>
<div class="t" style="left:1242.00px;top:981.95px;font-size:20.5px;color:#151515;letter-spacing:-0.1px;-webkit-text-stroke:0.4px #151515;">APN name</div>
<div class="t" style="left:1415.70px;width:600px;text-align:center;top:981.95px;font-size:20.5px;color:#151515;letter-spacing:-0.1px;-webkit-text-stroke:0.4px #151515;">Status</div>
<div class="t" style="left:1744.50px;width:600px;text-align:center;top:981.95px;font-size:20.5px;color:#151515;letter-spacing:-0.1px;-webkit-text-stroke:0.4px #151515;">Effective date</div>
<div class="t" style="left:2073.30px;width:600px;text-align:center;top:981.95px;font-size:20.5px;color:#151515;letter-spacing:-0.1px;-webkit-text-stroke:0.4px #151515;">Expiration date</div>
<div class="t" style="left:2343.50px;width:600px;text-align:center;top:981.95px;font-size:20.5px;color:#151515;letter-spacing:-0.1px;-webkit-text-stroke:0.4px #151515;">Action</div>
<svg class="r" style="left:875.90px;top:981.50px;" width="11" height="19" viewBox="0 0 11 19"><path d="M5.5 0 L11 7 H0 Z" fill="#b8b8b8"/><path d="M5.5 18.5 L11 11.5 H0 Z" fill="#b8b8b8"/></svg>
<svg class="r" style="left:1205.20px;top:981.50px;" width="11" height="19" viewBox="0 0 11 19"><path d="M5.5 0 L11 7 H0 Z" fill="#b8b8b8"/><path d="M5.5 18.5 L11 11.5 H0 Z" fill="#b8b8b8"/></svg>
<svg class="r" style="left:1534.20px;top:981.50px;" width="11" height="19" viewBox="0 0 11 19"><path d="M5.5 0 L11 7 H0 Z" fill="#b8b8b8"/><path d="M5.5 18.5 L11 11.5 H0 Z" fill="#b8b8b8"/></svg>
<svg class="r" style="left:1862.80px;top:981.50px;" width="11" height="19" viewBox="0 0 11 19"><path d="M5.5 0 L11 7 H0 Z" fill="#b8b8b8"/><path d="M5.5 18.5 L11 11.5 H0 Z" fill="#b8b8b8"/></svg>
<svg class="r" style="left:2191.70px;top:981.50px;" width="11" height="19" viewBox="0 0 11 19"><path d="M5.5 0 L11 7 H0 Z" fill="#b8b8b8"/><path d="M5.5 18.5 L11 11.5 H0 Z" fill="#b8b8b8"/></svg>
<svg class="r" style="left:2521.00px;top:981.50px;" width="11" height="19" viewBox="0 0 11 19"><path d="M5.5 0 L11 7 H0 Z" fill="#b8b8b8"/><path d="M5.5 18.5 L11 11.5 H0 Z" fill="#b8b8b8"/></svg>
<div class="r" style="left:2766px;top:981px;width:20.5px;height:20px;background:#fff;border-radius:4px;"></div>
<div class="r" style="left:159.50px;top:1018.00px;width:2651.50px;height:51.65px;background:#fff;border-bottom:1px solid #efefef;"></div>
<div class="r" style="left:243.20px;top:1018.00px;width:1.00px;height:51.65px;background:#f0f0f0;"></div>
<div class="r" style="left:571.90px;top:1018.00px;width:1.00px;height:51.65px;background:#f0f0f0;"></div>
<div class="r" style="left:900.20px;top:1018.00px;width:1.00px;height:51.65px;background:#f0f0f0;"></div>
<div class="r" style="left:1229.50px;top:1018.00px;width:1.00px;height:51.65px;background:#f0f0f0;"></div>
<div class="r" style="left:1558.50px;top:1018.00px;width:1.00px;height:51.65px;background:#f0f0f0;"></div>
<div class="r" style="left:1887.10px;top:1018.00px;width:1.00px;height:51.65px;background:#f0f0f0;"></div>
<div class="r" style="left:2216.00px;top:1018.00px;width:1.00px;height:51.65px;background:#f0f0f0;"></div>
<div class="r" style="left:2545.30px;top:1018.00px;width:1.00px;height:51.65px;background:#f0f0f0;"></div>
<div class="r" style="left:2741.00px;top:1018.00px;width:1.00px;height:51.65px;background:#f0f0f0;"></div>
<div class="t" style="left:-98.40px;width:600px;text-align:center;top:1034.71px;font-size:19.6px;color:#1f1f22;">1</div>
<div class="t" style="left:254.70px;top:1034.71px;font-size:19.6px;color:#1f1f22;letter-spacing:-0.1px;">VNMVT - Viettel Group</div>
<div class="t" style="left:583.40px;top:1034.71px;font-size:19.6px;color:#1f1f22;letter-spacing:-0.1px;">LA01N - Network_Lan12</div>
<div class="t" style="left:912.20px;top:1034.71px;font-size:19.6px;color:#1f1f22;letter-spacing:-0.1px;">B - ViLTE MOC/MTC</div>
<div class="t" style="left:1241.50px;top:1034.71px;font-size:19.6px;color:#1f1f22;letter-spacing:-0.1px;">Y99</div>
<div class="r" style="left:1672.4px;top:1026.40px;width:101.7px;height:34.8px;background:#fd5c3b;border-radius:6.5px;"></div>
<div class="t" style="left:1423.40px;width:600px;text-align:center;top:1034.37px;font-size:20px;color:#fff;">Inactive</div>
<div class="t" style="left:1752.05px;width:600px;text-align:center;top:1034.71px;font-size:19.6px;color:#1f1f22;letter-spacing:-0.1px;">29/10/2025</div>
<div class="t" style="left:2081.15px;width:600px;text-align:center;top:1034.71px;font-size:19.6px;color:#1f1f22;letter-spacing:-0.1px;">31/10/2025</div>
<svg class="r" style="left:2571.00px;top:1037.00px;" width="20" height="16" viewBox="0 0 20 16"><ellipse cx="10" cy="8" rx="8.8" ry="6.8" stroke="#111" stroke-width="1.7" fill="none" transform="rotate(-8 10 8)"/><circle cx="10" cy="8" r="2.6" stroke="#111" stroke-width="1.7" fill="none"/></svg>
<svg class="r" style="left:2608.00px;top:1035.00px;" width="19" height="20" viewBox="0 0 19 20"><path d="M3.5 16 L2.5 12.5 L12.5 2.2 A2.3 2.3 0 0 1 15.8 5.5 L5.8 15.8 Z" stroke="#111" stroke-width="1.6" fill="none" stroke-linejoin="round"/><path d="M11.5 3.5 L14.5 6.5" stroke="#111" stroke-width="1.3"/><path d="M1 19.2 H18.2" stroke="#111" stroke-width="1.7"/></svg>
<svg class="r" style="left:2644.00px;top:1036.00px;" width="17" height="18" viewBox="0 0 17 18"><path d="M4 8.5 V4.5 A2.5 2.5 0 0 1 6.5 2 H10.5 A2.5 2.5 0 0 1 13 4.5 V8.5" stroke="#111" stroke-width="2" fill="none"/><rect x="0.5" y="8" width="16" height="10" rx="0.8" fill="#111"/><path d="M8.5 11.5 V14" stroke="#fff" stroke-width="1.6"/></svg>
<svg class="r" style="left:2680.00px;top:1035.50px;" width="18" height="19" viewBox="0 0 18 19"><path d="M0.5 4 H17.5" stroke="#e0103c" stroke-width="1.7"/><path d="M5 4 V2.2 A1 1 0 0 1 6 1 H12 A1 1 0 0 1 13 2.2 V4" stroke="#e0103c" stroke-width="1.7" fill="none"/><path d="M2.2 4 L3.8 18.5 H14.2 L15.8 4" stroke="#e0103c" stroke-width="1.7" fill="none" stroke-linejoin="round"/></svg>
<div class="r" style="left:2766px;top:1033.00px;width:21px;height:21.5px;border:1.2px solid #dedede;border-radius:4px;background:#fff;"></div>
<div class="r" style="left:159.50px;top:1069.65px;width:2651.50px;height:51.65px;background:#f8f8f8;border-bottom:1px solid #efefef;"></div>
<div class="r" style="left:243.20px;top:1069.65px;width:1.00px;height:51.65px;background:#f0f0f0;"></div>
<div class="r" style="left:571.90px;top:1069.65px;width:1.00px;height:51.65px;background:#f0f0f0;"></div>
<div class="r" style="left:900.20px;top:1069.65px;width:1.00px;height:51.65px;background:#f0f0f0;"></div>
<div class="r" style="left:1229.50px;top:1069.65px;width:1.00px;height:51.65px;background:#f0f0f0;"></div>
<div class="r" style="left:1558.50px;top:1069.65px;width:1.00px;height:51.65px;background:#f0f0f0;"></div>
<div class="r" style="left:1887.10px;top:1069.65px;width:1.00px;height:51.65px;background:#f0f0f0;"></div>
<div class="r" style="left:2216.00px;top:1069.65px;width:1.00px;height:51.65px;background:#f0f0f0;"></div>
<div class="r" style="left:2545.30px;top:1069.65px;width:1.00px;height:51.65px;background:#f0f0f0;"></div>
<div class="r" style="left:2741.00px;top:1069.65px;width:1.00px;height:51.65px;background:#f0f0f0;"></div>
<div class="t" style="left:-98.40px;width:600px;text-align:center;top:1086.36px;font-size:19.6px;color:#1f1f22;">2</div>
<div class="t" style="left:254.70px;top:1086.36px;font-size:19.6px;color:#1f1f22;letter-spacing:-0.1px;">VNMVT - Viettel Group</div>
<div class="t" style="left:583.40px;top:1086.36px;font-size:19.6px;color:#1f1f22;letter-spacing:-0.1px;">LA01N - Network_Lan12</div>
<div class="t" style="left:912.20px;top:1086.36px;font-size:19.6px;color:#1f1f22;letter-spacing:-0.1px;">B - ViLTE MOC/MTC</div>
<div class="t" style="left:1241.50px;top:1086.36px;font-size:19.6px;color:#1f1f22;letter-spacing:-0.1px;">Y99</div>
<div class="r" style="left:1679.5px;top:1078.05px;width:87.5px;height:34.8px;background:#10ae84;border-radius:6.5px;"></div>
<div class="t" style="left:1423.40px;width:600px;text-align:center;top:1086.02px;font-size:20px;color:#fff;">Active</div>
<div class="t" style="left:1752.05px;width:600px;text-align:center;top:1086.36px;font-size:19.6px;color:#1f1f22;letter-spacing:-0.1px;">29/10/2025</div>
<div class="t" style="left:2081.15px;width:600px;text-align:center;top:1086.36px;font-size:19.6px;color:#1f1f22;letter-spacing:-0.1px;">30/10/2025</div>
<svg class="r" style="left:2571.00px;top:1088.65px;" width="20" height="16" viewBox="0 0 20 16"><ellipse cx="10" cy="8" rx="8.8" ry="6.8" stroke="#111" stroke-width="1.7" fill="none" transform="rotate(-8 10 8)"/><circle cx="10" cy="8" r="2.6" stroke="#111" stroke-width="1.7" fill="none"/></svg>
<svg class="r" style="left:2608.00px;top:1086.65px;" width="19" height="20" viewBox="0 0 19 20"><path d="M3.5 16 L2.5 12.5 L12.5 2.2 A2.3 2.3 0 0 1 15.8 5.5 L5.8 15.8 Z" stroke="#111" stroke-width="1.6" fill="none" stroke-linejoin="round"/><path d="M11.5 3.5 L14.5 6.5" stroke="#111" stroke-width="1.3"/><path d="M1 19.2 H18.2" stroke="#111" stroke-width="1.7"/></svg>
<svg class="r" style="left:2644.00px;top:1087.65px;" width="17" height="18" viewBox="0 0 17 18"><path d="M4 8.5 V4.5 A2.5 2.5 0 0 1 6.5 2 H10.5 A2.5 2.5 0 0 1 13 4.5 V8.5" stroke="#111" stroke-width="2" fill="none"/><rect x="0.5" y="8" width="16" height="10" rx="0.8" fill="#111"/><path d="M8.5 11.5 V14" stroke="#fff" stroke-width="1.6"/></svg>
<svg class="r" style="left:2680.00px;top:1087.15px;" width="18" height="19" viewBox="0 0 18 19"><path d="M0.5 4 H17.5" stroke="#e0103c" stroke-width="1.7"/><path d="M5 4 V2.2 A1 1 0 0 1 6 1 H12 A1 1 0 0 1 13 2.2 V4" stroke="#e0103c" stroke-width="1.7" fill="none"/><path d="M2.2 4 L3.8 18.5 H14.2 L15.8 4" stroke="#e0103c" stroke-width="1.7" fill="none" stroke-linejoin="round"/></svg>
<div class="r" style="left:2766px;top:1084.65px;width:21px;height:21.5px;border:1.2px solid #dedede;border-radius:4px;background:#fff;"></div>
<div class="r" style="left:159.50px;top:1121.30px;width:2651.50px;height:51.65px;background:#fff;border-bottom:1px solid #efefef;"></div>
<div class="r" style="left:243.20px;top:1121.30px;width:1.00px;height:51.65px;background:#f0f0f0;"></div>
<div class="r" style="left:571.90px;top:1121.30px;width:1.00px;height:51.65px;background:#f0f0f0;"></div>
<div class="r" style="left:900.20px;top:1121.30px;width:1.00px;height:51.65px;background:#f0f0f0;"></div>
<div class="r" style="left:1229.50px;top:1121.30px;width:1.00px;height:51.65px;background:#f0f0f0;"></div>
<div class="r" style="left:1558.50px;top:1121.30px;width:1.00px;height:51.65px;background:#f0f0f0;"></div>
<div class="r" style="left:1887.10px;top:1121.30px;width:1.00px;height:51.65px;background:#f0f0f0;"></div>
<div class="r" style="left:2216.00px;top:1121.30px;width:1.00px;height:51.65px;background:#f0f0f0;"></div>
<div class="r" style="left:2545.30px;top:1121.30px;width:1.00px;height:51.65px;background:#f0f0f0;"></div>
<div class="r" style="left:2741.00px;top:1121.30px;width:1.00px;height:51.65px;background:#f0f0f0;"></div>
<div class="t" style="left:-98.40px;width:600px;text-align:center;top:1138.01px;font-size:19.6px;color:#1f1f22;">3</div>
<div class="t" style="left:254.70px;top:1138.01px;font-size:19.6px;color:#1f1f22;letter-spacing:-0.1px;">VNMVT - Viettel Group</div>
<div class="t" style="left:583.40px;top:1138.01px;font-size:19.6px;color:#1f1f22;letter-spacing:-0.1px;">LA01N - Network_Lan12</div>
<div class="t" style="left:912.20px;top:1138.01px;font-size:19.6px;color:#1f1f22;letter-spacing:-0.1px;">B - ViLTE MOC/MTC</div>
<div class="t" style="left:1241.50px;top:1138.01px;font-size:19.6px;color:#1f1f22;letter-spacing:-0.1px;">WW3</div>
<div class="r" style="left:1679.5px;top:1129.70px;width:87.5px;height:34.8px;background:#10ae84;border-radius:6.5px;"></div>
<div class="t" style="left:1423.40px;width:600px;text-align:center;top:1137.67px;font-size:20px;color:#fff;">Active</div>
<div class="t" style="left:1752.05px;width:600px;text-align:center;top:1138.01px;font-size:19.6px;color:#1f1f22;letter-spacing:-0.1px;">22/10/2025</div>
<div class="t" style="left:2081.15px;width:600px;text-align:center;top:1138.01px;font-size:19.6px;color:#1f1f22;letter-spacing:-0.1px;"></div>
<svg class="r" style="left:2571.00px;top:1140.30px;" width="20" height="16" viewBox="0 0 20 16"><ellipse cx="10" cy="8" rx="8.8" ry="6.8" stroke="#111" stroke-width="1.7" fill="none" transform="rotate(-8 10 8)"/><circle cx="10" cy="8" r="2.6" stroke="#111" stroke-width="1.7" fill="none"/></svg>
<svg class="r" style="left:2608.00px;top:1138.30px;" width="19" height="20" viewBox="0 0 19 20"><path d="M3.5 16 L2.5 12.5 L12.5 2.2 A2.3 2.3 0 0 1 15.8 5.5 L5.8 15.8 Z" stroke="#111" stroke-width="1.6" fill="none" stroke-linejoin="round"/><path d="M11.5 3.5 L14.5 6.5" stroke="#111" stroke-width="1.3"/><path d="M1 19.2 H18.2" stroke="#111" stroke-width="1.7"/></svg>
<svg class="r" style="left:2644.00px;top:1139.30px;" width="17" height="18" viewBox="0 0 17 18"><path d="M4 8.5 V4.5 A2.5 2.5 0 0 1 6.5 2 H10.5 A2.5 2.5 0 0 1 13 4.5 V8.5" stroke="#111" stroke-width="2" fill="none"/><rect x="0.5" y="8" width="16" height="10" rx="0.8" fill="#111"/><path d="M8.5 11.5 V14" stroke="#fff" stroke-width="1.6"/></svg>
<svg class="r" style="left:2680.00px;top:1138.80px;" width="18" height="19" viewBox="0 0 18 19"><path d="M0.5 4 H17.5" stroke="#e0103c" stroke-width="1.7"/><path d="M5 4 V2.2 A1 1 0 0 1 6 1 H12 A1 1 0 0 1 13 2.2 V4" stroke="#e0103c" stroke-width="1.7" fill="none"/><path d="M2.2 4 L3.8 18.5 H14.2 L15.8 4" stroke="#e0103c" stroke-width="1.7" fill="none" stroke-linejoin="round"/></svg>
<div class="r" style="left:2766px;top:1136.30px;width:21px;height:21.5px;border:1.2px solid #dedede;border-radius:4px;background:#fff;"></div>
<div class="r" style="left:159.50px;top:1172.95px;width:2651.50px;height:51.65px;background:#f8f8f8;border-bottom:1px solid #efefef;"></div>
<div class="r" style="left:243.20px;top:1172.95px;width:1.00px;height:51.65px;background:#f0f0f0;"></div>
<div class="r" style="left:571.90px;top:1172.95px;width:1.00px;height:51.65px;background:#f0f0f0;"></div>
<div class="r" style="left:900.20px;top:1172.95px;width:1.00px;height:51.65px;background:#f0f0f0;"></div>
<div class="r" style="left:1229.50px;top:1172.95px;width:1.00px;height:51.65px;background:#f0f0f0;"></div>
<div class="r" style="left:1558.50px;top:1172.95px;width:1.00px;height:51.65px;background:#f0f0f0;"></div>
<div class="r" style="left:1887.10px;top:1172.95px;width:1.00px;height:51.65px;background:#f0f0f0;"></div>
<div class="r" style="left:2216.00px;top:1172.95px;width:1.00px;height:51.65px;background:#f0f0f0;"></div>
<div class="r" style="left:2545.30px;top:1172.95px;width:1.00px;height:51.65px;background:#f0f0f0;"></div>
<div class="r" style="left:2741.00px;top:1172.95px;width:1.00px;height:51.65px;background:#f0f0f0;"></div>
<div class="t" style="left:-98.40px;width:600px;text-align:center;top:1189.66px;font-size:19.6px;color:#1f1f22;">4</div>
<div class="t" style="left:254.70px;top:1189.66px;font-size:19.6px;color:#1f1f22;letter-spacing:-0.1px;">VNMVT - Viettel Group</div>
<div class="t" style="left:583.40px;top:1189.66px;font-size:19.6px;color:#1f1f22;letter-spacing:-0.1px;">LA01N - Network_Lan12</div>
<div class="t" style="left:912.20px;top:1189.66px;font-size:19.6px;color:#1f1f22;letter-spacing:-0.1px;">B - ViLTE MOC/MTC</div>
<div class="t" style="left:1241.50px;top:1189.66px;font-size:19.6px;color:#1f1f22;letter-spacing:-0.1px;">WW2</div>
<div class="r" style="left:1679.5px;top:1181.35px;width:87.5px;height:34.8px;background:#10ae84;border-radius:6.5px;"></div>
<div class="t" style="left:1423.40px;width:600px;text-align:center;top:1189.32px;font-size:20px;color:#fff;">Active</div>
<div class="t" style="left:1752.05px;width:600px;text-align:center;top:1189.66px;font-size:19.6px;color:#1f1f22;letter-spacing:-0.1px;">20/10/2025</div>
<div class="t" style="left:2081.15px;width:600px;text-align:center;top:1189.66px;font-size:19.6px;color:#1f1f22;letter-spacing:-0.1px;">28/10/2025</div>
<svg class="r" style="left:2571.00px;top:1191.95px;" width="20" height="16" viewBox="0 0 20 16"><ellipse cx="10" cy="8" rx="8.8" ry="6.8" stroke="#111" stroke-width="1.7" fill="none" transform="rotate(-8 10 8)"/><circle cx="10" cy="8" r="2.6" stroke="#111" stroke-width="1.7" fill="none"/></svg>
<svg class="r" style="left:2608.00px;top:1189.95px;" width="19" height="20" viewBox="0 0 19 20"><path d="M3.5 16 L2.5 12.5 L12.5 2.2 A2.3 2.3 0 0 1 15.8 5.5 L5.8 15.8 Z" stroke="#111" stroke-width="1.6" fill="none" stroke-linejoin="round"/><path d="M11.5 3.5 L14.5 6.5" stroke="#111" stroke-width="1.3"/><path d="M1 19.2 H18.2" stroke="#111" stroke-width="1.7"/></svg>
<svg class="r" style="left:2644.00px;top:1190.95px;" width="17" height="18" viewBox="0 0 17 18"><path d="M4 8.5 V4.5 A2.5 2.5 0 0 1 6.5 2 H10.5 A2.5 2.5 0 0 1 13 4.5 V8.5" stroke="#111" stroke-width="2" fill="none"/><rect x="0.5" y="8" width="16" height="10" rx="0.8" fill="#111"/><path d="M8.5 11.5 V14" stroke="#fff" stroke-width="1.6"/></svg>
<svg class="r" style="left:2680.00px;top:1190.45px;" width="18" height="19" viewBox="0 0 18 19"><path d="M0.5 4 H17.5" stroke="#e0103c" stroke-width="1.7"/><path d="M5 4 V2.2 A1 1 0 0 1 6 1 H12 A1 1 0 0 1 13 2.2 V4" stroke="#e0103c" stroke-width="1.7" fill="none"/><path d="M2.2 4 L3.8 18.5 H14.2 L15.8 4" stroke="#e0103c" stroke-width="1.7" fill="none" stroke-linejoin="round"/></svg>
<div class="r" style="left:2766px;top:1187.95px;width:21px;height:21.5px;border:1.2px solid #dedede;border-radius:4px;background:#fff;"></div>
<div class="r" style="left:159.50px;top:1224.60px;width:2651.50px;height:51.65px;background:#fff;border-bottom:1px solid #efefef;"></div>
<div class="r" style="left:243.20px;top:1224.60px;width:1.00px;height:51.65px;background:#f0f0f0;"></div>
<div class="r" style="left:571.90px;top:1224.60px;width:1.00px;height:51.65px;background:#f0f0f0;"></div>
<div class="r" style="left:900.20px;top:1224.60px;width:1.00px;height:51.65px;background:#f0f0f0;"></div>
<div class="r" style="left:1229.50px;top:1224.60px;width:1.00px;height:51.65px;background:#f0f0f0;"></div>
<div class="r" style="left:1558.50px;top:1224.60px;width:1.00px;height:51.65px;background:#f0f0f0;"></div>
<div class="r" style="left:1887.10px;top:1224.60px;width:1.00px;height:51.65px;background:#f0f0f0;"></div>
<div class="r" style="left:2216.00px;top:1224.60px;width:1.00px;height:51.65px;background:#f0f0f0;"></div>
<div class="r" style="left:2545.30px;top:1224.60px;width:1.00px;height:51.65px;background:#f0f0f0;"></div>
<div class="r" style="left:2741.00px;top:1224.60px;width:1.00px;height:51.65px;background:#f0f0f0;"></div>
<div class="t" style="left:-98.40px;width:600px;text-align:center;top:1241.31px;font-size:19.6px;color:#1f1f22;">5</div>
<div class="t" style="left:254.70px;top:1241.31px;font-size:19.6px;color:#1f1f22;letter-spacing:-0.1px;">VNMVT - Viettel Group</div>
<div class="t" style="left:583.40px;top:1241.31px;font-size:19.6px;color:#1f1f22;letter-spacing:-0.1px;">LA01N - Network_Lan12</div>
<div class="t" style="left:912.20px;top:1241.31px;font-size:19.6px;color:#1f1f22;letter-spacing:-0.1px;">B - ViLTE MOC/MTC</div>
<div class="t" style="left:1241.50px;top:1241.31px;font-size:19.6px;color:#1f1f22;letter-spacing:-0.1px;">A80</div>
<div class="r" style="left:1679.5px;top:1233.00px;width:87.5px;height:34.8px;background:#10ae84;border-radius:6.5px;"></div>
<div class="t" style="left:1423.40px;width:600px;text-align:center;top:1240.97px;font-size:20px;color:#fff;">Active</div>
<div class="t" style="left:1752.05px;width:600px;text-align:center;top:1241.31px;font-size:19.6px;color:#1f1f22;letter-spacing:-0.1px;">29/10/2025</div>
<div class="t" style="left:2081.15px;width:600px;text-align:center;top:1241.31px;font-size:19.6px;color:#1f1f22;letter-spacing:-0.1px;">30/10/2025</div>
<svg class="r" style="left:2571.00px;top:1243.60px;" width="20" height="16" viewBox="0 0 20 16"><ellipse cx="10" cy="8" rx="8.8" ry="6.8" stroke="#111" stroke-width="1.7" fill="none" transform="rotate(-8 10 8)"/><circle cx="10" cy="8" r="2.6" stroke="#111" stroke-width="1.7" fill="none"/></svg>
<svg class="r" style="left:2608.00px;top:1241.60px;" width="19" height="20" viewBox="0 0 19 20"><path d="M3.5 16 L2.5 12.5 L12.5 2.2 A2.3 2.3 0 0 1 15.8 5.5 L5.8 15.8 Z" stroke="#111" stroke-width="1.6" fill="none" stroke-linejoin="round"/><path d="M11.5 3.5 L14.5 6.5" stroke="#111" stroke-width="1.3"/><path d="M1 19.2 H18.2" stroke="#111" stroke-width="1.7"/></svg>
<svg class="r" style="left:2644.00px;top:1242.60px;" width="17" height="18" viewBox="0 0 17 18"><path d="M4 8.5 V4.5 A2.5 2.5 0 0 1 6.5 2 H10.5 A2.5 2.5 0 0 1 13 4.5 V8.5" stroke="#111" stroke-width="2" fill="none"/><rect x="0.5" y="8" width="16" height="10" rx="0.8" fill="#111"/><path d="M8.5 11.5 V14" stroke="#fff" stroke-width="1.6"/></svg>
<svg class="r" style="left:2680.00px;top:1242.10px;" width="18" height="19" viewBox="0 0 18 19"><path d="M0.5 4 H17.5" stroke="#e0103c" stroke-width="1.7"/><path d="M5 4 V2.2 A1 1 0 0 1 6 1 H12 A1 1 0 0 1 13 2.2 V4" stroke="#e0103c" stroke-width="1.7" fill="none"/><path d="M2.2 4 L3.8 18.5 H14.2 L15.8 4" stroke="#e0103c" stroke-width="1.7" fill="none" stroke-linejoin="round"/></svg>
<div class="r" style="left:2766px;top:1239.60px;width:21px;height:21.5px;border:1.2px solid #dedede;border-radius:4px;background:#fff;"></div>
<div class="r" style="left:159.50px;top:1276.25px;width:2651.50px;height:51.65px;background:#f8f8f8;border-bottom:1px solid #efefef;"></div>
<div class="r" style="left:243.20px;top:1276.25px;width:1.00px;height:51.65px;background:#f0f0f0;"></div>
<div class="r" style="left:571.90px;top:1276.25px;width:1.00px;height:51.65px;background:#f0f0f0;"></div>
<div class="r" style="left:900.20px;top:1276.25px;width:1.00px;height:51.65px;background:#f0f0f0;"></div>
<div class="r" style="left:1229.50px;top:1276.25px;width:1.00px;height:51.65px;background:#f0f0f0;"></div>
<div class="r" style="left:1558.50px;top:1276.25px;width:1.00px;height:51.65px;background:#f0f0f0;"></div>
<div class="r" style="left:1887.10px;top:1276.25px;width:1.00px;height:51.65px;background:#f0f0f0;"></div>
<div class="r" style="left:2216.00px;top:1276.25px;width:1.00px;height:51.65px;background:#f0f0f0;"></div>
<div class="r" style="left:2545.30px;top:1276.25px;width:1.00px;height:51.65px;background:#f0f0f0;"></div>
<div class="r" style="left:2741.00px;top:1276.25px;width:1.00px;height:51.65px;background:#f0f0f0;"></div>
<div class="t" style="left:-98.40px;width:600px;text-align:center;top:1292.96px;font-size:19.6px;color:#1f1f22;">6</div>
<div class="t" style="left:254.70px;top:1292.96px;font-size:19.6px;color:#1f1f22;letter-spacing:-0.1px;">VNMVT - Viettel Group</div>
<div class="t" style="left:583.40px;top:1292.96px;font-size:19.6px;color:#1f1f22;letter-spacing:-0.1px;">LA01N - Network_Lan12</div>
<div class="t" style="left:912.20px;top:1292.96px;font-size:19.6px;color:#1f1f22;letter-spacing:-0.1px;">1561 - n&#7845;nksadasda</div>
<div class="t" style="left:1241.50px;top:1292.96px;font-size:19.6px;color:#1f1f22;letter-spacing:-0.1px;">TestAPN</div>
<div class="r" style="left:1672.4px;top:1284.65px;width:101.7px;height:34.8px;background:#fd5c3b;border-radius:6.5px;"></div>
<div class="t" style="left:1423.40px;width:600px;text-align:center;top:1292.62px;font-size:20px;color:#fff;">Inactive</div>
<div class="t" style="left:1752.05px;width:600px;text-align:center;top:1292.96px;font-size:19.6px;color:#1f1f22;letter-spacing:-0.1px;">15/10/2025</div>
<div class="t" style="left:2081.15px;width:600px;text-align:center;top:1292.96px;font-size:19.6px;color:#1f1f22;letter-spacing:-0.1px;">20/10/2025</div>
<svg class="r" style="left:2571.00px;top:1295.25px;" width="20" height="16" viewBox="0 0 20 16"><ellipse cx="10" cy="8" rx="8.8" ry="6.8" stroke="#111" stroke-width="1.7" fill="none" transform="rotate(-8 10 8)"/><circle cx="10" cy="8" r="2.6" stroke="#111" stroke-width="1.7" fill="none"/></svg>
<svg class="r" style="left:2608.00px;top:1293.25px;" width="19" height="20" viewBox="0 0 19 20"><path d="M3.5 16 L2.5 12.5 L12.5 2.2 A2.3 2.3 0 0 1 15.8 5.5 L5.8 15.8 Z" stroke="#111" stroke-width="1.6" fill="none" stroke-linejoin="round"/><path d="M11.5 3.5 L14.5 6.5" stroke="#111" stroke-width="1.3"/><path d="M1 19.2 H18.2" stroke="#111" stroke-width="1.7"/></svg>
<svg class="r" style="left:2644.00px;top:1294.25px;" width="17" height="18" viewBox="0 0 17 18"><path d="M4 8.5 V4.5 A2.5 2.5 0 0 1 6.5 2 H10.5 A2.5 2.5 0 0 1 13 4.5 V8.5" stroke="#111" stroke-width="2" fill="none"/><rect x="0.5" y="8" width="16" height="10" rx="0.8" fill="#111"/><path d="M8.5 11.5 V14" stroke="#fff" stroke-width="1.6"/></svg>
<svg class="r" style="left:2680.00px;top:1293.75px;" width="18" height="19" viewBox="0 0 18 19"><path d="M0.5 4 H17.5" stroke="#e0103c" stroke-width="1.7"/><path d="M5 4 V2.2 A1 1 0 0 1 6 1 H12 A1 1 0 0 1 13 2.2 V4" stroke="#e0103c" stroke-width="1.7" fill="none"/><path d="M2.2 4 L3.8 18.5 H14.2 L15.8 4" stroke="#e0103c" stroke-width="1.7" fill="none" stroke-linejoin="round"/></svg>
<div class="r" style="left:2766px;top:1291.25px;width:21px;height:21.5px;border:1.2px solid #dedede;border-radius:4px;background:#fff;"></div>
<div class="r" style="left:159.50px;top:1327.90px;width:2651.50px;height:51.65px;background:#fff;border-bottom:1px solid #efefef;"></div>
<div class="r" style="left:243.20px;top:1327.90px;width:1.00px;height:51.65px;background:#f0f0f0;"></div>
<div class="r" style="left:571.90px;top:1327.90px;width:1.00px;height:51.65px;background:#f0f0f0;"></div>
<div class="r" style="left:900.20px;top:1327.90px;width:1.00px;height:51.65px;background:#f0f0f0;"></div>
<div class="r" style="left:1229.50px;top:1327.90px;width:1.00px;height:51.65px;background:#f0f0f0;"></div>
<div class="r" style="left:1558.50px;top:1327.90px;width:1.00px;height:51.65px;background:#f0f0f0;"></div>
<div class="r" style="left:1887.10px;top:1327.90px;width:1.00px;height:51.65px;background:#f0f0f0;"></div>
<div class="r" style="left:2216.00px;top:1327.90px;width:1.00px;height:51.65px;background:#f0f0f0;"></div>
<div class="r" style="left:2545.30px;top:1327.90px;width:1.00px;height:51.65px;background:#f0f0f0;"></div>
<div class="r" style="left:2741.00px;top:1327.90px;width:1.00px;height:51.65px;background:#f0f0f0;"></div>
<div class="t" style="left:-98.40px;width:600px;text-align:center;top:1344.61px;font-size:19.6px;color:#1f1f22;">7</div>
<div class="t" style="left:254.70px;top:1344.61px;font-size:19.6px;color:#1f1f22;letter-spacing:-0.1px;">VNMVT - Viettel Group</div>
<div class="t" style="left:583.40px;top:1344.61px;font-size:19.6px;color:#1f1f22;letter-spacing:-0.1px;">ABS07 - anhtt2</div>
<div class="t" style="left:912.20px;top:1344.61px;font-size:19.6px;color:#1f1f22;letter-spacing:-0.1px;">Data - DATA</div>
<div class="t" style="left:1241.50px;top:1344.61px;font-size:19.6px;color:#1f1f22;letter-spacing:-0.1px;">apnametest1</div>
<div class="r" style="left:1672.4px;top:1336.30px;width:101.7px;height:34.8px;background:#fd5c3b;border-radius:6.5px;"></div>
<div class="t" style="left:1423.40px;width:600px;text-align:center;top:1344.27px;font-size:20px;color:#fff;">Inactive</div>
<div class="t" style="left:1752.05px;width:600px;text-align:center;top:1344.61px;font-size:19.6px;color:#1f1f22;letter-spacing:-0.1px;">20/10/2025</div>
<div class="t" style="left:2081.15px;width:600px;text-align:center;top:1344.61px;font-size:19.6px;color:#1f1f22;letter-spacing:-0.1px;">25/10/2025</div>
<svg class="r" style="left:2571.00px;top:1346.90px;" width="20" height="16" viewBox="0 0 20 16"><ellipse cx="10" cy="8" rx="8.8" ry="6.8" stroke="#111" stroke-width="1.7" fill="none" transform="rotate(-8 10 8)"/><circle cx="10" cy="8" r="2.6" stroke="#111" stroke-width="1.7" fill="none"/></svg>
<svg class="r" style="left:2608.00px;top:1344.90px;" width="19" height="20" viewBox="0 0 19 20"><path d="M3.5 16 L2.5 12.5 L12.5 2.2 A2.3 2.3 0 0 1 15.8 5.5 L5.8 15.8 Z" stroke="#111" stroke-width="1.6" fill="none" stroke-linejoin="round"/><path d="M11.5 3.5 L14.5 6.5" stroke="#111" stroke-width="1.3"/><path d="M1 19.2 H18.2" stroke="#111" stroke-width="1.7"/></svg>
<svg class="r" style="left:2644.00px;top:1345.90px;" width="17" height="18" viewBox="0 0 17 18"><path d="M4 8.5 V4.5 A2.5 2.5 0 0 1 6.5 2 H10.5 A2.5 2.5 0 0 1 13 4.5 V8.5" stroke="#111" stroke-width="2" fill="none"/><rect x="0.5" y="8" width="16" height="10" rx="0.8" fill="#111"/><path d="M8.5 11.5 V14" stroke="#fff" stroke-width="1.6"/></svg>
<svg class="r" style="left:2680.00px;top:1345.40px;" width="18" height="19" viewBox="0 0 18 19"><path d="M0.5 4 H17.5" stroke="#e0103c" stroke-width="1.7"/><path d="M5 4 V2.2 A1 1 0 0 1 6 1 H12 A1 1 0 0 1 13 2.2 V4" stroke="#e0103c" stroke-width="1.7" fill="none"/><path d="M2.2 4 L3.8 18.5 H14.2 L15.8 4" stroke="#e0103c" stroke-width="1.7" fill="none" stroke-linejoin="round"/></svg>
<div class="r" style="left:2766px;top:1342.90px;width:21px;height:21.5px;border:1.2px solid #dedede;border-radius:4px;background:#fff;"></div>
<div class="r" style="left:159.50px;top:1379.55px;width:2651.50px;height:51.65px;background:#f8f8f8;border-bottom:1px solid #efefef;"></div>
<div class="r" style="left:243.20px;top:1379.55px;width:1.00px;height:51.65px;background:#f0f0f0;"></div>
<div class="r" style="left:571.90px;top:1379.55px;width:1.00px;height:51.65px;background:#f0f0f0;"></div>
<div class="r" style="left:900.20px;top:1379.55px;width:1.00px;height:51.65px;background:#f0f0f0;"></div>
<div class="r" style="left:1229.50px;top:1379.55px;width:1.00px;height:51.65px;background:#f0f0f0;"></div>
<div class="r" style="left:1558.50px;top:1379.55px;width:1.00px;height:51.65px;background:#f0f0f0;"></div>
<div class="r" style="left:1887.10px;top:1379.55px;width:1.00px;height:51.65px;background:#f0f0f0;"></div>
<div class="r" style="left:2216.00px;top:1379.55px;width:1.00px;height:51.65px;background:#f0f0f0;"></div>
<div class="r" style="left:2545.30px;top:1379.55px;width:1.00px;height:51.65px;background:#f0f0f0;"></div>
<div class="r" style="left:2741.00px;top:1379.55px;width:1.00px;height:51.65px;background:#f0f0f0;"></div>
<div class="t" style="left:-98.40px;width:600px;text-align:center;top:1396.26px;font-size:19.6px;color:#1f1f22;">8</div>
<div class="t" style="left:254.70px;top:1396.26px;font-size:19.6px;color:#1f1f22;letter-spacing:-0.1px;">VNMVT - Viettel Group</div>
<div class="t" style="left:583.40px;top:1396.26px;font-size:19.6px;color:#1f1f22;letter-spacing:-0.1px;">ABS07 - anhtt2</div>
<div class="t" style="left:912.20px;top:1396.26px;font-size:19.6px;color:#1f1f22;letter-spacing:-0.1px;">Data - DATA</div>
<div class="t" style="left:1241.50px;top:1396.26px;font-size:19.6px;color:#1f1f22;letter-spacing:-0.1px;">apnametest1</div>
<div class="r" style="left:1672.4px;top:1387.95px;width:101.7px;height:34.8px;background:#fd5c3b;border-radius:6.5px;"></div>
<div class="t" style="left:1423.40px;width:600px;text-align:center;top:1395.92px;font-size:20px;color:#fff;">Inactive</div>
<div class="t" style="left:1752.05px;width:600px;text-align:center;top:1396.26px;font-size:19.6px;color:#1f1f22;letter-spacing:-0.1px;">20/10/2025</div>
<div class="t" style="left:2081.15px;width:600px;text-align:center;top:1396.26px;font-size:19.6px;color:#1f1f22;letter-spacing:-0.1px;">25/10/2025</div>
<svg class="r" style="left:2571.00px;top:1398.55px;" width="20" height="16" viewBox="0 0 20 16"><ellipse cx="10" cy="8" rx="8.8" ry="6.8" stroke="#111" stroke-width="1.7" fill="none" transform="rotate(-8 10 8)"/><circle cx="10" cy="8" r="2.6" stroke="#111" stroke-width="1.7" fill="none"/></svg>
<svg class="r" style="left:2608.00px;top:1396.55px;" width="19" height="20" viewBox="0 0 19 20"><path d="M3.5 16 L2.5 12.5 L12.5 2.2 A2.3 2.3 0 0 1 15.8 5.5 L5.8 15.8 Z" stroke="#111" stroke-width="1.6" fill="none" stroke-linejoin="round"/><path d="M11.5 3.5 L14.5 6.5" stroke="#111" stroke-width="1.3"/><path d="M1 19.2 H18.2" stroke="#111" stroke-width="1.7"/></svg>
<svg class="r" style="left:2644.00px;top:1397.55px;" width="17" height="18" viewBox="0 0 17 18"><path d="M4 8.5 V4.5 A2.5 2.5 0 0 1 6.5 2 H10.5 A2.5 2.5 0 0 1 13 4.5 V8.5" stroke="#111" stroke-width="2" fill="none"/><rect x="0.5" y="8" width="16" height="10" rx="0.8" fill="#111"/><path d="M8.5 11.5 V14" stroke="#fff" stroke-width="1.6"/></svg>
<svg class="r" style="left:2680.00px;top:1397.05px;" width="18" height="19" viewBox="0 0 18 19"><path d="M0.5 4 H17.5" stroke="#e0103c" stroke-width="1.7"/><path d="M5 4 V2.2 A1 1 0 0 1 6 1 H12 A1 1 0 0 1 13 2.2 V4" stroke="#e0103c" stroke-width="1.7" fill="none"/><path d="M2.2 4 L3.8 18.5 H14.2 L15.8 4" stroke="#e0103c" stroke-width="1.7" fill="none" stroke-linejoin="round"/></svg>
<div class="r" style="left:2766px;top:1394.55px;width:21px;height:21.5px;border:1.2px solid #dedede;border-radius:4px;background:#fff;"></div>
<div class="r" style="left:159.50px;top:1431.20px;width:2651.50px;height:51.65px;background:#fff;border-bottom:1px solid #efefef;"></div>
<div class="r" style="left:243.20px;top:1431.20px;width:1.00px;height:51.65px;background:#f0f0f0;"></div>
<div class="r" style="left:571.90px;top:1431.20px;width:1.00px;height:51.65px;background:#f0f0f0;"></div>
<div class="r" style="left:900.20px;top:1431.20px;width:1.00px;height:51.65px;background:#f0f0f0;"></div>
<div class="r" style="left:1229.50px;top:1431.20px;width:1.00px;height:51.65px;background:#f0f0f0;"></div>
<div class="r" style="left:1558.50px;top:1431.20px;width:1.00px;height:51.65px;background:#f0f0f0;"></div>
<div class="r" style="left:1887.10px;top:1431.20px;width:1.00px;height:51.65px;background:#f0f0f0;"></div>
<div class="r" style="left:2216.00px;top:1431.20px;width:1.00px;height:51.65px;background:#f0f0f0;"></div>
<div class="r" style="left:2545.30px;top:1431.20px;width:1.00px;height:51.65px;background:#f0f0f0;"></div>
<div class="r" style="left:2741.00px;top:1431.20px;width:1.00px;height:51.65px;background:#f0f0f0;"></div>
<div class="t" style="left:-98.40px;width:600px;text-align:center;top:1447.91px;font-size:19.6px;color:#1f1f22;">9</div>
<div class="t" style="left:254.70px;top:1447.91px;font-size:19.6px;color:#1f1f22;letter-spacing:-0.1px;">VNMVT - Viettel Group</div>
<div class="t" style="left:583.40px;top:1447.91px;font-size:19.6px;color:#1f1f22;letter-spacing:-0.1px;">ABS07 - anhtt2</div>
<div class="t" style="left:912.20px;top:1447.91px;font-size:19.6px;color:#1f1f22;letter-spacing:-0.1px;">Data - DATA</div>
<div class="t" style="left:1241.50px;top:1447.91px;font-size:19.6px;color:#1f1f22;letter-spacing:-0.1px;">apnametest1</div>
<div class="r" style="left:1672.4px;top:1439.60px;width:101.7px;height:34.8px;background:#fd5c3b;border-radius:6.5px;"></div>
<div class="t" style="left:1423.40px;width:600px;text-align:center;top:1447.57px;font-size:20px;color:#fff;">Inactive</div>
<div class="t" style="left:1752.05px;width:600px;text-align:center;top:1447.91px;font-size:19.6px;color:#1f1f22;letter-spacing:-0.1px;">20/10/2025</div>
<div class="t" style="left:2081.15px;width:600px;text-align:center;top:1447.91px;font-size:19.6px;color:#1f1f22;letter-spacing:-0.1px;">23/10/2025</div>
<svg class="r" style="left:2571.00px;top:1450.20px;" width="20" height="16" viewBox="0 0 20 16"><ellipse cx="10" cy="8" rx="8.8" ry="6.8" stroke="#111" stroke-width="1.7" fill="none" transform="rotate(-8 10 8)"/><circle cx="10" cy="8" r="2.6" stroke="#111" stroke-width="1.7" fill="none"/></svg>
<svg class="r" style="left:2608.00px;top:1448.20px;" width="19" height="20" viewBox="0 0 19 20"><path d="M3.5 16 L2.5 12.5 L12.5 2.2 A2.3 2.3 0 0 1 15.8 5.5 L5.8 15.8 Z" stroke="#111" stroke-width="1.6" fill="none" stroke-linejoin="round"/><path d="M11.5 3.5 L14.5 6.5" stroke="#111" stroke-width="1.3"/><path d="M1 19.2 H18.2" stroke="#111" stroke-width="1.7"/></svg>
<svg class="r" style="left:2644.00px;top:1449.20px;" width="17" height="18" viewBox="0 0 17 18"><path d="M4 8.5 V4.5 A2.5 2.5 0 0 1 6.5 2 H10.5 A2.5 2.5 0 0 1 13 4.5 V8.5" stroke="#111" stroke-width="2" fill="none"/><rect x="0.5" y="8" width="16" height="10" rx="0.8" fill="#111"/><path d="M8.5 11.5 V14" stroke="#fff" stroke-width="1.6"/></svg>
<svg class="r" style="left:2680.00px;top:1448.70px;" width="18" height="19" viewBox="0 0 18 19"><path d="M0.5 4 H17.5" stroke="#e0103c" stroke-width="1.7"/><path d="M5 4 V2.2 A1 1 0 0 1 6 1 H12 A1 1 0 0 1 13 2.2 V4" stroke="#e0103c" stroke-width="1.7" fill="none"/><path d="M2.2 4 L3.8 18.5 H14.2 L15.8 4" stroke="#e0103c" stroke-width="1.7" fill="none" stroke-linejoin="round"/></svg>
<div class="r" style="left:2766px;top:1446.20px;width:21px;height:21.5px;border:1.2px solid #dedede;border-radius:4px;background:#fff;"></div>
<div class="r" style="left:159.50px;top:1482.85px;width:2651.50px;height:51.65px;background:#f8f8f8;border-bottom:1px solid #efefef;"></div>
<div class="r" style="left:243.20px;top:1482.85px;width:1.00px;height:51.65px;background:#f0f0f0;"></div>
<div class="r" style="left:571.90px;top:1482.85px;width:1.00px;height:51.65px;background:#f0f0f0;"></div>
<div class="r" style="left:900.20px;top:1482.85px;width:1.00px;height:51.65px;background:#f0f0f0;"></div>
<div class="r" style="left:1229.50px;top:1482.85px;width:1.00px;height:51.65px;background:#f0f0f0;"></div>
<div class="r" style="left:1558.50px;top:1482.85px;width:1.00px;height:51.65px;background:#f0f0f0;"></div>
<div class="r" style="left:1887.10px;top:1482.85px;width:1.00px;height:51.65px;background:#f0f0f0;"></div>
<div class="r" style="left:2216.00px;top:1482.85px;width:1.00px;height:51.65px;background:#f0f0f0;"></div>
<div class="r" style="left:2545.30px;top:1482.85px;width:1.00px;height:51.65px;background:#f0f0f0;"></div>
<div class="r" style="left:2741.00px;top:1482.85px;width:1.00px;height:51.65px;background:#f0f0f0;"></div>
<div class="t" style="left:-98.40px;width:600px;text-align:center;top:1499.56px;font-size:19.6px;color:#1f1f22;">10</div>
<div class="t" style="left:254.70px;top:1499.56px;font-size:19.6px;color:#1f1f22;letter-spacing:-0.1px;">VNMVT - Viettel Group</div>
<div class="t" style="left:583.40px;top:1499.56px;font-size:19.6px;color:#1f1f22;letter-spacing:-0.1px;">ABS07 - anhtt2</div>
<div class="t" style="left:912.20px;top:1499.56px;font-size:19.6px;color:#1f1f22;letter-spacing:-0.1px;">Data - DATA</div>
<div class="t" style="left:1241.50px;top:1499.56px;font-size:19.6px;color:#1f1f22;letter-spacing:-0.1px;">apnametest1</div>
<div class="r" style="left:1679.5px;top:1491.25px;width:87.5px;height:34.8px;background:#10ae84;border-radius:6.5px;"></div>
<div class="t" style="left:1423.40px;width:600px;text-align:center;top:1499.22px;font-size:20px;color:#fff;">Active</div>
<div class="t" style="left:1752.05px;width:600px;text-align:center;top:1499.56px;font-size:19.6px;color:#1f1f22;letter-spacing:-0.1px;">20/10/2025</div>
<div class="t" style="left:2081.15px;width:600px;text-align:center;top:1499.56px;font-size:19.6px;color:#1f1f22;letter-spacing:-0.1px;">23/10/2025</div>
<svg class="r" style="left:2571.00px;top:1501.85px;" width="20" height="16" viewBox="0 0 20 16"><ellipse cx="10" cy="8" rx="8.8" ry="6.8" stroke="#111" stroke-width="1.7" fill="none" transform="rotate(-8 10 8)"/><circle cx="10" cy="8" r="2.6" stroke="#111" stroke-width="1.7" fill="none"/></svg>
<svg class="r" style="left:2608.00px;top:1499.85px;" width="19" height="20" viewBox="0 0 19 20"><path d="M3.5 16 L2.5 12.5 L12.5 2.2 A2.3 2.3 0 0 1 15.8 5.5 L5.8 15.8 Z" stroke="#111" stroke-width="1.6" fill="none" stroke-linejoin="round"/><path d="M11.5 3.5 L14.5 6.5" stroke="#111" stroke-width="1.3"/><path d="M1 19.2 H18.2" stroke="#111" stroke-width="1.7"/></svg>
<svg class="r" style="left:2644.00px;top:1500.85px;" width="17" height="18" viewBox="0 0 17 18"><path d="M4 8.5 V4.5 A2.5 2.5 0 0 1 6.5 2 H10.5 A2.5 2.5 0 0 1 13 4.5 V8.5" stroke="#111" stroke-width="2" fill="none"/><rect x="0.5" y="8" width="16" height="10" rx="0.8" fill="#111"/><path d="M8.5 11.5 V14" stroke="#fff" stroke-width="1.6"/></svg>
<svg class="r" style="left:2680.00px;top:1500.35px;" width="18" height="19" viewBox="0 0 18 19"><path d="M0.5 4 H17.5" stroke="#e0103c" stroke-width="1.7"/><path d="M5 4 V2.2 A1 1 0 0 1 6 1 H12 A1 1 0 0 1 13 2.2 V4" stroke="#e0103c" stroke-width="1.7" fill="none"/><path d="M2.2 4 L3.8 18.5 H14.2 L15.8 4" stroke="#e0103c" stroke-width="1.7" fill="none" stroke-linejoin="round"/></svg>
<div class="r" style="left:2766px;top:1497.85px;width:21px;height:21.5px;border:1.2px solid #dedede;border-radius:4px;background:#fff;"></div>
<div class="t" style="left:159.50px;top:1614.37px;font-size:20px;color:#1f1f22;">Show</div>
<div class="r" style="left:220.4px;top:1602.3px;width:78px;height:43.5px;border:1.2px solid #dcdcdc;border-radius:9px;"></div>
<div class="t" style="left:236.50px;top:1614.37px;font-size:20px;color:#1f1f22;">10</div>
<svg class="r" style="left:268.00px;top:1620.00px;" width="14" height="10" viewBox="0 0 14 10"><path d="M1 1 L7 8.5 L13 1" stroke="#b0b0b0" stroke-width="1.4" fill="none"/></svg>
<div class="t" style="left:2342.50px;top:1614.11px;font-size:19.6px;color:#111;">1 - 10 Total records: 21</div>
<svg class="r" style="left:2557.50px;top:1618.00px;" width="15" height="15" viewBox="0 0 15 15"><path d="M7 1 L1.5 7 L7 13 M13.5 1 L8 7 L13.5 13" stroke="#bdbdbd" stroke-width="1.6" fill="none"/></svg>
<svg class="r" style="left:2589.00px;top:1618.00px;" width="11" height="15" viewBox="0 0 11 15"><path d="M10 1 L1.5 7 L10 13" stroke="#bdbdbd" stroke-width="1.6" fill="none"/></svg>
<div class="r" style="left:2622px;top:1606.8px;width:32.80px;height:34px;background:#f6f7f7;border-radius:7px;"></div>
<div class="t" style="left:2338.40px;width:600px;text-align:center;top:1614.11px;font-size:19.6px;color:#e8002d;">1</div>
<div class="r" style="left:2666px;top:1606.8px;width:33.30px;height:34px;background:#f6f7f7;border-radius:7px;"></div>
<div class="t" style="left:2382.65px;width:600px;text-align:center;top:1614.11px;font-size:19.6px;color:#111;">2</div>
<div class="r" style="left:2711px;top:1606.8px;width:32.80px;height:34px;background:#f6f7f7;border-radius:7px;"></div>
<div class="t" style="left:2427.40px;width:600px;text-align:center;top:1614.11px;font-size:19.6px;color:#111;">3</div>
<svg class="r" style="left:2765.00px;top:1618.50px;" width="12" height="15" viewBox="0 0 12 15"><path d="M1 1 L10.5 7.5 L1 14" stroke="#111" stroke-width="1.9" fill="none"/></svg>
<svg class="r" style="left:2794.00px;top:1618.50px;" width="16" height="15" viewBox="0 0 16 15"><path d="M1 1 L7 7.5 L1 14 M8 1 L14 7.5 L8 14" stroke="#111" stroke-width="1.9" fill="none"/></svg>
<div class="r" style="left:170px;top:613.75px;width:637.60px;height:402.25px;background:#fff;border-radius:0 0 10px 10px;box-shadow:0 6px 16px rgba(0,0,0,0.08),0 3px 6px -4px rgba(0,0,0,0.12),0 9px 28px 8px rgba(0,0,0,0.05);overflow:hidden;"></div>
<div class="r" style="left:170.00px;top:613.75px;width:627.00px;height:46.15px;background:#f5f5f5;"></div>
<div class="r" style="left:187px;top:627.40px;width:21.5px;height:21.3px;border:1.2px solid #d9d9d9;border-radius:4px;background:#fff;"></div>
<div class="t" style="left:220.00px;top:627.32px;font-size:19.7px;color:#222;">01081 - 01081-TN th&iacute;ch g&acirc;y war :3</div>
<div class="r" style="left:187px;top:672.05px;width:21.5px;height:21.3px;border:1.2px solid #d9d9d9;border-radius:4px;background:#fff;"></div>
<div class="t" style="left:220.00px;top:671.97px;font-size:19.7px;color:#222;">01081 - 01081-TN th&iacute;ch g&acirc;y war :3</div>
<div class="r" style="left:187px;top:716.70px;width:21.5px;height:21.3px;border:1.2px solid #d9d9d9;border-radius:4px;background:#fff;"></div>
<div class="t" style="left:220.00px;top:716.62px;font-size:19.7px;color:#222;">01081 - 01081-TN th&iacute;ch g&acirc;y war :3</div>
<div class="r" style="left:187px;top:761.35px;width:21.5px;height:21.3px;border:1.2px solid #d9d9d9;border-radius:4px;background:#fff;"></div>
<div class="t" style="left:220.00px;top:761.27px;font-size:19.7px;color:#222;">01081 - 01081-TN th&iacute;ch g&acirc;y war :3</div>
<div class="r" style="left:187px;top:806.00px;width:21.5px;height:21.3px;border:1.2px solid #d9d9d9;border-radius:4px;background:#fff;"></div>
<div class="t" style="left:220.00px;top:805.92px;font-size:19.7px;color:#222;">01081 - 01081-TN th&iacute;ch g&acirc;y war :3</div>
<div class="r" style="left:187px;top:850.65px;width:21.5px;height:21.3px;border:1.2px solid #d9d9d9;border-radius:4px;background:#fff;"></div>
<div class="t" style="left:220.00px;top:850.57px;font-size:19.7px;color:#222;">01081 - 01081-TN th&iacute;ch g&acirc;y war :3</div>
<div class="r" style="left:187px;top:895.30px;width:21.5px;height:21.3px;border:1.2px solid #d9d9d9;border-radius:4px;background:#fff;"></div>
<div class="t" style="left:220.00px;top:895.22px;font-size:19.7px;color:#222;">01081 - 01081-TN th&iacute;ch g&acirc;y war :3</div>
<div class="r" style="left:187px;top:939.95px;width:21.5px;height:21.3px;border:1.2px solid #d9d9d9;border-radius:4px;background:#fff;"></div>
<div class="t" style="left:220.00px;top:939.87px;font-size:19.7px;color:#222;">01081 - 01081-TN th&iacute;ch g&acirc;y war :3</div>
<div class="r" style="left:797.00px;top:613.75px;width:10.60px;height:358.25px;background:#fafafa;"></div>
<div class="r" style="left:797.50px;top:615.00px;width:9.80px;height:22.50px;background:#6b7190;border-radius:5px;"></div>
<div class="r" style="left:170px;top:972px;width:637.60px;height:44px;background:#f7f7f7;border-radius:0 0 10px 10px;"></div>
<div class="r" style="left:187px;top:983.5px;width:21.5px;height:21.3px;border:1.2px solid #e3e3e3;border-radius:4px;background:#fff;"></div>
<div class="t" style="left:221.00px;top:985.12px;font-size:19.7px;color:#222;">All</div>
<div class="t" style="left:2440.50px;top:1599.89px;font-size:27.3px;color:rgba(120,120,120,0.45);">Activate Windows</div>
<div class="t" style="left:2437.50px;top:1636.77px;font-size:20px;color:rgba(120,120,120,0.45);">Go to Settings to activate Windows.</div>
</body></html>
